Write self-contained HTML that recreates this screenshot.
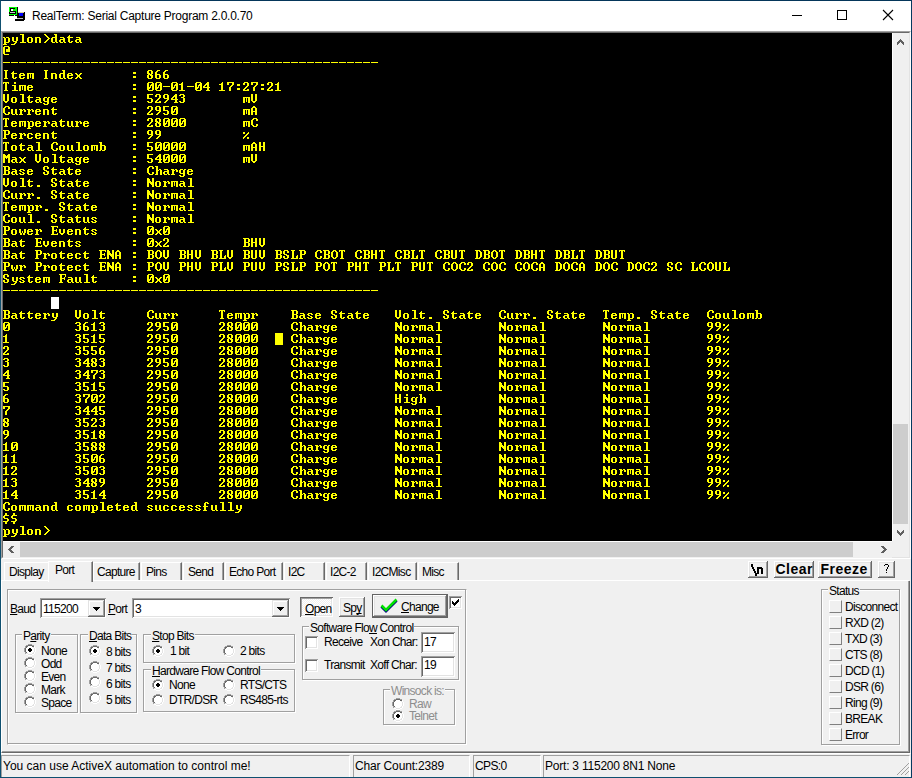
<!DOCTYPE html><html><head><meta charset="utf-8"><style>
html,body{margin:0;padding:0;}
body{width:912px;height:778px;overflow:hidden;position:relative;background:#f0f0f0;font-family:"Liberation Sans",sans-serif;}
.b{position:absolute;box-sizing:border-box;}
.u{position:absolute;white-space:pre;font-size:12px;line-height:12px;letter-spacing:-0.7px;color:#000;}
.s{position:absolute;white-space:pre;font-size:12px;line-height:12px;color:#000;}
#term{position:absolute;left:3px;top:33px;width:889px;height:508px;background:#000;overflow:hidden;}
u{text-decoration:underline;text-decoration-thickness:1px;text-underline-offset:1px;text-decoration-skip-ink:none;}
</style></head><body><div class="b" style="left:0px;top:0px;width:912px;height:31px;background:#fff;"></div><svg class="b" style="left:0px;top:0px" width="30" height="24" shape-rendering="crispEdges"><rect x="9" y="7" width="8" height="8" fill="#00ff00"/><rect x="17" y="7" width="1" height="5" fill="#000"/><rect x="10" y="8" width="5" height="1" fill="#000"/><rect x="10" y="8" width="1" height="4" fill="#000"/><rect x="11" y="9" width="2" height="2" fill="#fff"/><rect x="10" y="11" width="6" height="1" fill="#000"/><rect x="9" y="12" width="7" height="2" fill="#000"/><rect x="10" y="12" width="5" height="1" fill="#c8c8c8"/><rect x="9" y="15" width="5" height="1" fill="#000"/><rect x="15" y="15" width="2" height="1" fill="#000"/><rect x="17" y="12" width="8" height="8" fill="#000"/><rect x="19" y="13" width="4" height="3" fill="#0000ff"/><rect x="18" y="12" width="6" height="1" fill="#d8d0a0"/><rect x="15" y="19" width="9" height="2" fill="#000"/><rect x="17" y="18" width="6" height="1" fill="#c0c0c0"/></svg><div class="s" style="left:32px;top:10px;letter-spacing:-0.25px;">RealTerm: Serial Capture Program 2.0.0.70</div><div class="b" style="left:792px;top:15px;width:10px;height:1px;background:#000;"></div><div class="b" style="left:837px;top:10px;width:10px;height:10px;border:1px solid #000;"></div><svg class="b" style="left:882px;top:9px" width="12" height="12" viewBox="0 0 12 12"><path d="M1 1 L11 11 M11 1 L1 11" stroke="#000" stroke-width="1.1"/></svg><div class="b" style="left:1px;top:31px;width:910px;height:528px;border-top:1px solid #a0a0a0;border-left:1px solid #a0a0a0;border-right:1px solid #fff;border-bottom:1px solid #fff;"></div><div class="b" style="left:2px;top:32px;width:908px;height:526px;border-top:1px solid #696969;border-left:1px solid #696969;border-right:1px solid #e3e3e3;border-bottom:1px solid #e3e3e3;"></div><div id="term"><svg width="889" height="508" style="position:absolute;left:0;top:0" shape-rendering="crispEdges" fill="#ffff00"><defs><path id="g0" d="M2 0h2v1h-2zM2 1h2v1h-2zM1 2h5v1h-5zM0 3h2v1h-2zM0 4h2v1h-2zM1 5h4v1h-4zM4 6h2v1h-2zM4 7h2v1h-2zM0 8h5v1h-5zM2 9h2v1h-2zM2 10h2v1h-2z"/><path id="g1" d="M0 3h2v1h-2zM5 3h1v1h-1zM0 4h2v1h-2zM4 4h2v1h-2zM3 5h2v1h-2zM2 6h2v1h-2zM1 7h2v1h-2zM0 8h2v1h-2zM4 8h2v1h-2zM0 9h1v1h-1zM4 9h2v1h-2z"/><path id="g2" d="M0 5h7v1h-7z"/><path id="g3" d="M2 8h3v1h-3zM2 9h3v1h-3z"/><path id="g4" d="M1 1h5v1h-5zM0 2h2v1h-2zM5 2h2v1h-2zM0 3h2v1h-2zM4 3h3v1h-3zM0 4h2v1h-2zM3 4h4v1h-4zM0 5h2v1h-2zM3 5h1v1h-1zM5 5h2v1h-2zM0 6h4v1h-4zM5 6h2v1h-2zM0 7h3v1h-3zM5 7h2v1h-2zM0 8h2v1h-2zM5 8h2v1h-2zM1 9h5v1h-5z"/><path id="g5" d="M3 1h1v1h-1zM2 2h2v1h-2zM0 3h4v1h-4zM2 4h2v1h-2zM2 5h2v1h-2zM2 6h2v1h-2zM2 7h2v1h-2zM2 8h2v1h-2zM0 9h6v1h-6z"/><path id="g6" d="M1 1h4v1h-4zM0 2h2v1h-2zM4 2h2v1h-2zM0 3h2v1h-2zM4 3h2v1h-2zM4 4h2v1h-2zM3 5h2v1h-2zM2 6h2v1h-2zM1 7h2v1h-2zM0 8h2v1h-2zM4 8h2v1h-2zM0 9h6v1h-6z"/><path id="g7" d="M1 1h4v1h-4zM0 2h2v1h-2zM4 2h2v1h-2zM4 3h2v1h-2zM2 4h3v1h-3zM4 5h2v1h-2zM4 6h2v1h-2zM4 7h2v1h-2zM0 8h2v1h-2zM4 8h2v1h-2zM1 9h4v1h-4z"/><path id="g8" d="M4 1h2v1h-2zM3 2h3v1h-3zM2 3h4v1h-4zM1 4h2v1h-2zM4 4h2v1h-2zM0 5h2v1h-2zM4 5h2v1h-2zM0 6h7v1h-7zM4 7h2v1h-2zM4 8h2v1h-2zM3 9h4v1h-4z"/><path id="g9" d="M0 1h6v1h-6zM0 2h2v1h-2zM0 3h2v1h-2zM0 4h2v1h-2zM0 5h5v1h-5zM4 6h2v1h-2zM4 7h2v1h-2zM0 8h2v1h-2zM4 8h2v1h-2zM1 9h4v1h-4z"/><path id="g10" d="M2 1h3v1h-3zM1 2h2v1h-2zM0 3h2v1h-2zM0 4h2v1h-2zM0 5h5v1h-5zM0 6h2v1h-2zM4 6h2v1h-2zM0 7h2v1h-2zM4 7h2v1h-2zM0 8h2v1h-2zM4 8h2v1h-2zM1 9h4v1h-4z"/><path id="g11" d="M0 1h7v1h-7zM0 2h2v1h-2zM5 2h2v1h-2zM0 3h2v1h-2zM5 3h2v1h-2zM4 4h2v1h-2zM3 5h2v1h-2zM2 6h2v1h-2zM2 7h2v1h-2zM2 8h2v1h-2zM2 9h2v1h-2z"/><path id="g12" d="M1 1h4v1h-4zM0 2h2v1h-2zM4 2h2v1h-2zM0 3h2v1h-2zM4 3h2v1h-2zM0 4h3v1h-3zM4 4h2v1h-2zM1 5h4v1h-4zM0 6h2v1h-2zM3 6h3v1h-3zM0 7h2v1h-2zM4 7h2v1h-2zM0 8h2v1h-2zM4 8h2v1h-2zM1 9h4v1h-4z"/><path id="g13" d="M1 1h4v1h-4zM0 2h2v1h-2zM4 2h2v1h-2zM0 3h2v1h-2zM4 3h2v1h-2zM0 4h2v1h-2zM4 4h2v1h-2zM1 5h5v1h-5zM4 6h2v1h-2zM3 7h2v1h-2zM2 8h2v1h-2zM1 9h2v1h-2z"/><path id="g14" d="M2 3h3v1h-3zM2 4h3v1h-3zM2 7h3v1h-3zM2 8h3v1h-3z"/><path id="g15" d="M1 1h2v1h-2zM2 2h2v1h-2zM3 3h2v1h-2zM4 4h2v1h-2zM5 5h2v1h-2zM4 6h2v1h-2zM3 7h2v1h-2zM2 8h2v1h-2zM1 9h2v1h-2z"/><path id="g16" d="M1 1h5v1h-5zM0 2h2v1h-2zM5 2h2v1h-2zM0 3h2v1h-2zM5 3h2v1h-2zM0 4h2v1h-2zM3 4h4v1h-4zM0 5h2v1h-2zM3 5h4v1h-4zM0 6h2v1h-2zM3 6h4v1h-4zM0 7h2v1h-2zM0 8h2v1h-2zM1 9h5v1h-5z"/><path id="g17" d="M2 1h2v1h-2zM1 2h4v1h-4zM0 3h2v1h-2zM4 3h2v1h-2zM0 4h2v1h-2zM4 4h2v1h-2zM0 5h2v1h-2zM4 5h2v1h-2zM0 6h6v1h-6zM0 7h2v1h-2zM4 7h2v1h-2zM0 8h2v1h-2zM4 8h2v1h-2zM0 9h2v1h-2zM4 9h2v1h-2z"/><path id="g18" d="M0 1h6v1h-6zM1 2h2v1h-2zM5 2h2v1h-2zM1 3h2v1h-2zM5 3h2v1h-2zM1 4h2v1h-2zM5 4h2v1h-2zM1 5h5v1h-5zM1 6h2v1h-2zM5 6h2v1h-2zM1 7h2v1h-2zM5 7h2v1h-2zM1 8h2v1h-2zM5 8h2v1h-2zM0 9h6v1h-6z"/><path id="g19" d="M2 1h4v1h-4zM1 2h2v1h-2zM5 2h2v1h-2zM0 3h2v1h-2zM5 3h2v1h-2zM0 4h2v1h-2zM0 5h2v1h-2zM0 6h2v1h-2zM0 7h2v1h-2zM5 7h2v1h-2zM1 8h2v1h-2zM5 8h2v1h-2zM2 9h4v1h-4z"/><path id="g20" d="M0 1h5v1h-5zM1 2h2v1h-2zM4 2h2v1h-2zM1 3h2v1h-2zM5 3h2v1h-2zM1 4h2v1h-2zM5 4h2v1h-2zM1 5h2v1h-2zM5 5h2v1h-2zM1 6h2v1h-2zM5 6h2v1h-2zM1 7h2v1h-2zM5 7h2v1h-2zM1 8h2v1h-2zM4 8h2v1h-2zM0 9h5v1h-5z"/><path id="g21" d="M0 1h7v1h-7zM1 2h2v1h-2zM6 2h1v1h-1zM1 3h2v1h-2zM1 4h2v1h-2zM5 4h1v1h-1zM1 5h5v1h-5zM1 6h2v1h-2zM5 6h1v1h-1zM1 7h2v1h-2zM1 8h2v1h-2zM6 8h1v1h-1zM0 9h7v1h-7z"/><path id="g22" d="M0 1h7v1h-7zM1 2h2v1h-2zM6 2h1v1h-1zM1 3h2v1h-2zM6 3h1v1h-1zM1 4h2v1h-2zM5 4h1v1h-1zM1 5h5v1h-5zM1 6h2v1h-2zM5 6h1v1h-1zM1 7h2v1h-2zM1 8h2v1h-2zM0 9h4v1h-4z"/><path id="g23" d="M0 1h2v1h-2zM4 1h2v1h-2zM0 2h2v1h-2zM4 2h2v1h-2zM0 3h2v1h-2zM4 3h2v1h-2zM0 4h2v1h-2zM4 4h2v1h-2zM0 5h6v1h-6zM0 6h2v1h-2zM4 6h2v1h-2zM0 7h2v1h-2zM4 7h2v1h-2zM0 8h2v1h-2zM4 8h2v1h-2zM0 9h2v1h-2zM4 9h2v1h-2z"/><path id="g24" d="M1 1h4v1h-4zM2 2h2v1h-2zM2 3h2v1h-2zM2 4h2v1h-2zM2 5h2v1h-2zM2 6h2v1h-2zM2 7h2v1h-2zM2 8h2v1h-2zM1 9h4v1h-4z"/><path id="g25" d="M0 1h4v1h-4zM1 2h2v1h-2zM1 3h2v1h-2zM1 4h2v1h-2zM1 5h2v1h-2zM1 6h2v1h-2zM6 6h1v1h-1zM1 7h2v1h-2zM5 7h2v1h-2zM1 8h2v1h-2zM5 8h2v1h-2zM0 9h7v1h-7z"/><path id="g26" d="M0 1h2v1h-2zM5 1h2v1h-2zM0 2h3v1h-3zM4 2h3v1h-3zM0 3h7v1h-7zM0 4h7v1h-7zM0 5h2v1h-2zM3 5h1v1h-1zM5 5h2v1h-2zM0 6h2v1h-2zM5 6h2v1h-2zM0 7h2v1h-2zM5 7h2v1h-2zM0 8h2v1h-2zM5 8h2v1h-2zM0 9h2v1h-2zM5 9h2v1h-2z"/><path id="g27" d="M0 1h2v1h-2zM5 1h2v1h-2zM0 2h3v1h-3zM5 2h2v1h-2zM0 3h3v1h-3zM5 3h2v1h-2zM0 4h4v1h-4zM5 4h2v1h-2zM0 5h7v1h-7zM0 6h2v1h-2zM3 6h4v1h-4zM0 7h2v1h-2zM4 7h3v1h-3zM0 8h2v1h-2zM5 8h2v1h-2zM0 9h2v1h-2zM5 9h2v1h-2z"/><path id="g28" d="M2 1h3v1h-3zM1 2h2v1h-2zM4 2h2v1h-2zM0 3h2v1h-2zM5 3h2v1h-2zM0 4h2v1h-2zM5 4h2v1h-2zM0 5h2v1h-2zM5 5h2v1h-2zM0 6h2v1h-2zM5 6h2v1h-2zM0 7h2v1h-2zM5 7h2v1h-2zM1 8h2v1h-2zM4 8h2v1h-2zM2 9h3v1h-3z"/><path id="g29" d="M0 1h6v1h-6zM1 2h2v1h-2zM5 2h2v1h-2zM1 3h2v1h-2zM5 3h2v1h-2zM1 4h2v1h-2zM5 4h2v1h-2zM1 5h5v1h-5zM1 6h2v1h-2zM1 7h2v1h-2zM1 8h2v1h-2zM0 9h4v1h-4z"/><path id="g30" d="M1 1h4v1h-4zM0 2h2v1h-2zM4 2h2v1h-2zM0 3h2v1h-2zM4 3h2v1h-2zM0 4h2v1h-2zM1 5h3v1h-3zM3 6h3v1h-3zM0 7h2v1h-2zM4 7h2v1h-2zM0 8h2v1h-2zM4 8h2v1h-2zM1 9h4v1h-4z"/><path id="g31" d="M0 1h6v1h-6zM0 2h1v1h-1zM2 2h2v1h-2zM5 2h1v1h-1zM2 3h2v1h-2zM2 4h2v1h-2zM2 5h2v1h-2zM2 6h2v1h-2zM2 7h2v1h-2zM2 8h2v1h-2zM1 9h4v1h-4z"/><path id="g32" d="M0 1h2v1h-2zM4 1h2v1h-2zM0 2h2v1h-2zM4 2h2v1h-2zM0 3h2v1h-2zM4 3h2v1h-2zM0 4h2v1h-2zM4 4h2v1h-2zM0 5h2v1h-2zM4 5h2v1h-2zM0 6h2v1h-2zM4 6h2v1h-2zM0 7h2v1h-2zM4 7h2v1h-2zM0 8h2v1h-2zM4 8h2v1h-2zM1 9h4v1h-4z"/><path id="g33" d="M0 1h2v1h-2zM4 1h2v1h-2zM0 2h2v1h-2zM4 2h2v1h-2zM0 3h2v1h-2zM4 3h2v1h-2zM0 4h2v1h-2zM4 4h2v1h-2zM0 5h2v1h-2zM4 5h2v1h-2zM0 6h2v1h-2zM4 6h2v1h-2zM0 7h2v1h-2zM4 7h2v1h-2zM1 8h4v1h-4zM2 9h2v1h-2z"/><path id="g34" d="M1 4h4v1h-4zM4 5h2v1h-2zM1 6h5v1h-5zM0 7h2v1h-2zM4 7h2v1h-2zM0 8h2v1h-2zM4 8h2v1h-2zM1 9h3v1h-3zM5 9h2v1h-2z"/><path id="g35" d="M0 1h3v1h-3zM1 2h2v1h-2zM1 3h2v1h-2zM1 4h5v1h-5zM1 5h2v1h-2zM5 5h2v1h-2zM1 6h2v1h-2zM5 6h2v1h-2zM1 7h2v1h-2zM5 7h2v1h-2zM1 8h2v1h-2zM5 8h2v1h-2zM0 9h2v1h-2zM3 9h3v1h-3z"/><path id="g36" d="M1 4h4v1h-4zM0 5h2v1h-2zM4 5h2v1h-2zM0 6h2v1h-2zM0 7h2v1h-2zM0 8h2v1h-2zM4 8h2v1h-2zM1 9h4v1h-4z"/><path id="g37" d="M3 1h3v1h-3zM4 2h2v1h-2zM4 3h2v1h-2zM1 4h5v1h-5zM0 5h2v1h-2zM4 5h2v1h-2zM0 6h2v1h-2zM4 6h2v1h-2zM0 7h2v1h-2zM4 7h2v1h-2zM0 8h2v1h-2zM4 8h2v1h-2zM1 9h3v1h-3zM5 9h2v1h-2z"/><path id="g38" d="M1 4h4v1h-4zM0 5h2v1h-2zM4 5h2v1h-2zM0 6h6v1h-6zM0 7h2v1h-2zM0 8h2v1h-2zM4 8h2v1h-2zM1 9h4v1h-4z"/><path id="g39" d="M2 1h3v1h-3zM1 2h2v1h-2zM4 2h2v1h-2zM1 3h2v1h-2zM1 4h2v1h-2zM0 5h5v1h-5zM1 6h2v1h-2zM1 7h2v1h-2zM1 8h2v1h-2zM0 9h4v1h-4z"/><path id="g40" d="M1 4h3v1h-3zM5 4h2v1h-2zM0 5h2v1h-2zM4 5h2v1h-2zM0 6h2v1h-2zM4 6h2v1h-2zM0 7h2v1h-2zM4 7h2v1h-2zM1 8h5v1h-5zM4 9h2v1h-2zM0 10h2v1h-2zM4 10h2v1h-2zM1 11h4v1h-4z"/><path id="g41" d="M0 1h3v1h-3zM1 2h2v1h-2zM1 3h2v1h-2zM1 4h2v1h-2zM4 4h2v1h-2zM1 5h3v1h-3zM5 5h2v1h-2zM1 6h2v1h-2zM5 6h2v1h-2zM1 7h2v1h-2zM5 7h2v1h-2zM1 8h2v1h-2zM5 8h2v1h-2zM0 9h3v1h-3zM5 9h2v1h-2z"/><path id="g42" d="M3 1h2v1h-2zM3 2h2v1h-2zM1 4h4v1h-4zM3 5h2v1h-2zM3 6h2v1h-2zM3 7h2v1h-2zM3 8h2v1h-2zM1 9h6v1h-6z"/><path id="g43" d="M1 1h4v1h-4zM3 2h2v1h-2zM3 3h2v1h-2zM3 4h2v1h-2zM3 5h2v1h-2zM3 6h2v1h-2zM3 7h2v1h-2zM3 8h2v1h-2zM1 9h6v1h-6z"/><path id="g44" d="M0 4h7v1h-7zM0 5h2v1h-2zM3 5h1v1h-1zM5 5h2v1h-2zM0 6h2v1h-2zM3 6h1v1h-1zM5 6h2v1h-2zM0 7h2v1h-2zM3 7h1v1h-1zM5 7h2v1h-2zM0 8h2v1h-2zM3 8h1v1h-1zM5 8h2v1h-2zM0 9h2v1h-2zM5 9h2v1h-2z"/><path id="g45" d="M0 4h5v1h-5zM0 5h2v1h-2zM4 5h2v1h-2zM0 6h2v1h-2zM4 6h2v1h-2zM0 7h2v1h-2zM4 7h2v1h-2zM0 8h2v1h-2zM4 8h2v1h-2zM0 9h2v1h-2zM4 9h2v1h-2z"/><path id="g46" d="M1 4h4v1h-4zM0 5h2v1h-2zM4 5h2v1h-2zM0 6h2v1h-2zM4 6h2v1h-2zM0 7h2v1h-2zM4 7h2v1h-2zM0 8h2v1h-2zM4 8h2v1h-2zM1 9h4v1h-4z"/><path id="g47" d="M0 4h2v1h-2zM3 4h3v1h-3zM1 5h2v1h-2zM5 5h2v1h-2zM1 6h2v1h-2zM5 6h2v1h-2zM1 7h2v1h-2zM5 7h2v1h-2zM1 8h2v1h-2zM5 8h2v1h-2zM1 9h5v1h-5zM1 10h2v1h-2zM0 11h4v1h-4z"/><path id="g48" d="M0 4h3v1h-3zM4 4h2v1h-2zM1 5h3v1h-3zM5 5h2v1h-2zM1 6h2v1h-2zM5 6h2v1h-2zM1 7h2v1h-2zM1 8h2v1h-2zM0 9h4v1h-4z"/><path id="g49" d="M1 4h4v1h-4zM0 5h2v1h-2zM4 5h2v1h-2zM1 6h2v1h-2zM3 7h2v1h-2zM0 8h2v1h-2zM4 8h2v1h-2zM1 9h4v1h-4z"/><path id="g50" d="M2 2h1v1h-1zM1 3h2v1h-2zM0 4h6v1h-6zM1 5h2v1h-2zM1 6h2v1h-2zM1 7h2v1h-2zM1 8h2v1h-2zM4 8h2v1h-2zM2 9h3v1h-3z"/><path id="g51" d="M0 4h2v1h-2zM4 4h2v1h-2zM0 5h2v1h-2zM4 5h2v1h-2zM0 6h2v1h-2zM4 6h2v1h-2zM0 7h2v1h-2zM4 7h2v1h-2zM0 8h2v1h-2zM4 8h2v1h-2zM1 9h3v1h-3zM5 9h2v1h-2z"/><path id="g52" d="M0 4h2v1h-2zM4 4h2v1h-2zM0 5h2v1h-2zM4 5h2v1h-2zM0 6h2v1h-2zM4 6h2v1h-2zM0 7h2v1h-2zM4 7h2v1h-2zM1 8h4v1h-4zM2 9h2v1h-2z"/><path id="g53" d="M0 4h2v1h-2zM5 4h2v1h-2zM0 5h2v1h-2zM5 5h2v1h-2zM0 6h2v1h-2zM3 6h1v1h-1zM5 6h2v1h-2zM0 7h2v1h-2zM3 7h1v1h-1zM5 7h2v1h-2zM1 8h2v1h-2zM4 8h2v1h-2zM1 9h2v1h-2zM4 9h2v1h-2z"/><path id="g54" d="M0 4h2v1h-2zM5 4h2v1h-2zM1 5h2v1h-2zM4 5h2v1h-2zM2 6h3v1h-3zM2 7h3v1h-3zM1 8h2v1h-2zM4 8h2v1h-2zM0 9h2v1h-2zM5 9h2v1h-2z"/><path id="g55" d="M1 4h2v1h-2zM5 4h2v1h-2zM1 5h2v1h-2zM5 5h2v1h-2zM1 6h2v1h-2zM5 6h2v1h-2zM1 7h2v1h-2zM5 7h2v1h-2zM2 8h4v1h-4zM4 9h2v1h-2zM3 10h2v1h-2zM0 11h4v1h-4z"/></defs><g transform="translate(0 0)"><use href="#g47" x="0"/><use href="#g55" x="8"/><use href="#g43" x="16"/><use href="#g46" x="24"/><use href="#g45" x="32"/><use href="#g15" x="40"/><use href="#g37" x="48"/><use href="#g34" x="56"/><use href="#g50" x="64"/><use href="#g34" x="72"/></g><g transform="translate(0 12)"><use href="#g16" x="0"/></g><g transform="translate(0 24)"><use href="#g2" x="0"/><use href="#g2" x="8"/><use href="#g2" x="16"/><use href="#g2" x="24"/><use href="#g2" x="32"/><use href="#g2" x="40"/><use href="#g2" x="48"/><use href="#g2" x="56"/><use href="#g2" x="64"/><use href="#g2" x="72"/><use href="#g2" x="80"/><use href="#g2" x="88"/><use href="#g2" x="96"/><use href="#g2" x="104"/><use href="#g2" x="112"/><use href="#g2" x="120"/><use href="#g2" x="128"/><use href="#g2" x="136"/><use href="#g2" x="144"/><use href="#g2" x="152"/><use href="#g2" x="160"/><use href="#g2" x="168"/><use href="#g2" x="176"/><use href="#g2" x="184"/><use href="#g2" x="192"/><use href="#g2" x="200"/><use href="#g2" x="208"/><use href="#g2" x="216"/><use href="#g2" x="224"/><use href="#g2" x="232"/><use href="#g2" x="240"/><use href="#g2" x="248"/><use href="#g2" x="256"/><use href="#g2" x="264"/><use href="#g2" x="272"/><use href="#g2" x="280"/><use href="#g2" x="288"/><use href="#g2" x="296"/><use href="#g2" x="304"/><use href="#g2" x="312"/><use href="#g2" x="320"/><use href="#g2" x="328"/><use href="#g2" x="336"/><use href="#g2" x="344"/><use href="#g2" x="352"/><use href="#g2" x="360"/><use href="#g2" x="368"/></g><g transform="translate(0 36)"><use href="#g24" x="0"/><use href="#g50" x="8"/><use href="#g38" x="16"/><use href="#g44" x="24"/><use href="#g24" x="40"/><use href="#g45" x="48"/><use href="#g37" x="56"/><use href="#g38" x="64"/><use href="#g54" x="72"/><use href="#g14" x="128"/><use href="#g12" x="144"/><use href="#g10" x="152"/><use href="#g10" x="160"/></g><g transform="translate(0 48)"><use href="#g31" x="0"/><use href="#g42" x="8"/><use href="#g44" x="16"/><use href="#g38" x="24"/><use href="#g14" x="128"/><use href="#g4" x="144"/><use href="#g4" x="152"/><use href="#g2" x="160"/><use href="#g4" x="168"/><use href="#g5" x="176"/><use href="#g2" x="184"/><use href="#g4" x="192"/><use href="#g8" x="200"/><use href="#g5" x="216"/><use href="#g11" x="224"/><use href="#g14" x="232"/><use href="#g6" x="240"/><use href="#g11" x="248"/><use href="#g14" x="256"/><use href="#g6" x="264"/><use href="#g5" x="272"/></g><g transform="translate(0 60)"><use href="#g33" x="0"/><use href="#g46" x="8"/><use href="#g43" x="16"/><use href="#g50" x="24"/><use href="#g34" x="32"/><use href="#g40" x="40"/><use href="#g38" x="48"/><use href="#g14" x="128"/><use href="#g9" x="144"/><use href="#g6" x="152"/><use href="#g13" x="160"/><use href="#g8" x="168"/><use href="#g7" x="176"/><use href="#g44" x="240"/><use href="#g33" x="248"/></g><g transform="translate(0 72)"><use href="#g19" x="0"/><use href="#g51" x="8"/><use href="#g48" x="16"/><use href="#g48" x="24"/><use href="#g38" x="32"/><use href="#g45" x="40"/><use href="#g50" x="48"/><use href="#g14" x="128"/><use href="#g6" x="144"/><use href="#g13" x="152"/><use href="#g9" x="160"/><use href="#g4" x="168"/><use href="#g44" x="240"/><use href="#g17" x="248"/></g><g transform="translate(0 84)"><use href="#g31" x="0"/><use href="#g38" x="8"/><use href="#g44" x="16"/><use href="#g47" x="24"/><use href="#g38" x="32"/><use href="#g48" x="40"/><use href="#g34" x="48"/><use href="#g50" x="56"/><use href="#g51" x="64"/><use href="#g48" x="72"/><use href="#g38" x="80"/><use href="#g14" x="128"/><use href="#g6" x="144"/><use href="#g12" x="152"/><use href="#g4" x="160"/><use href="#g4" x="168"/><use href="#g4" x="176"/><use href="#g44" x="240"/><use href="#g19" x="248"/></g><g transform="translate(0 96)"><use href="#g29" x="0"/><use href="#g38" x="8"/><use href="#g48" x="16"/><use href="#g36" x="24"/><use href="#g38" x="32"/><use href="#g45" x="40"/><use href="#g50" x="48"/><use href="#g14" x="128"/><use href="#g13" x="144"/><use href="#g13" x="152"/><use href="#g1" x="240"/></g><g transform="translate(0 108)"><use href="#g31" x="0"/><use href="#g46" x="8"/><use href="#g50" x="16"/><use href="#g34" x="24"/><use href="#g43" x="32"/><use href="#g19" x="48"/><use href="#g46" x="56"/><use href="#g51" x="64"/><use href="#g43" x="72"/><use href="#g46" x="80"/><use href="#g44" x="88"/><use href="#g35" x="96"/><use href="#g14" x="128"/><use href="#g9" x="144"/><use href="#g4" x="152"/><use href="#g4" x="160"/><use href="#g4" x="168"/><use href="#g4" x="176"/><use href="#g44" x="240"/><use href="#g17" x="248"/><use href="#g23" x="256"/></g><g transform="translate(0 120)"><use href="#g26" x="0"/><use href="#g34" x="8"/><use href="#g54" x="16"/><use href="#g33" x="32"/><use href="#g46" x="40"/><use href="#g43" x="48"/><use href="#g50" x="56"/><use href="#g34" x="64"/><use href="#g40" x="72"/><use href="#g38" x="80"/><use href="#g14" x="128"/><use href="#g9" x="144"/><use href="#g8" x="152"/><use href="#g4" x="160"/><use href="#g4" x="168"/><use href="#g4" x="176"/><use href="#g44" x="240"/><use href="#g33" x="248"/></g><g transform="translate(0 132)"><use href="#g18" x="0"/><use href="#g34" x="8"/><use href="#g49" x="16"/><use href="#g38" x="24"/><use href="#g30" x="40"/><use href="#g50" x="48"/><use href="#g34" x="56"/><use href="#g50" x="64"/><use href="#g38" x="72"/><use href="#g14" x="128"/><use href="#g19" x="144"/><use href="#g41" x="152"/><use href="#g34" x="160"/><use href="#g48" x="168"/><use href="#g40" x="176"/><use href="#g38" x="184"/></g><g transform="translate(0 144)"><use href="#g33" x="0"/><use href="#g46" x="8"/><use href="#g43" x="16"/><use href="#g50" x="24"/><use href="#g3" x="32"/><use href="#g30" x="48"/><use href="#g50" x="56"/><use href="#g34" x="64"/><use href="#g50" x="72"/><use href="#g38" x="80"/><use href="#g14" x="128"/><use href="#g27" x="144"/><use href="#g46" x="152"/><use href="#g48" x="160"/><use href="#g44" x="168"/><use href="#g34" x="176"/><use href="#g43" x="184"/></g><g transform="translate(0 156)"><use href="#g19" x="0"/><use href="#g51" x="8"/><use href="#g48" x="16"/><use href="#g48" x="24"/><use href="#g3" x="32"/><use href="#g30" x="48"/><use href="#g50" x="56"/><use href="#g34" x="64"/><use href="#g50" x="72"/><use href="#g38" x="80"/><use href="#g14" x="128"/><use href="#g27" x="144"/><use href="#g46" x="152"/><use href="#g48" x="160"/><use href="#g44" x="168"/><use href="#g34" x="176"/><use href="#g43" x="184"/></g><g transform="translate(0 168)"><use href="#g31" x="0"/><use href="#g38" x="8"/><use href="#g44" x="16"/><use href="#g47" x="24"/><use href="#g48" x="32"/><use href="#g3" x="40"/><use href="#g30" x="56"/><use href="#g50" x="64"/><use href="#g34" x="72"/><use href="#g50" x="80"/><use href="#g38" x="88"/><use href="#g14" x="128"/><use href="#g27" x="144"/><use href="#g46" x="152"/><use href="#g48" x="160"/><use href="#g44" x="168"/><use href="#g34" x="176"/><use href="#g43" x="184"/></g><g transform="translate(0 180)"><use href="#g19" x="0"/><use href="#g46" x="8"/><use href="#g51" x="16"/><use href="#g43" x="24"/><use href="#g3" x="32"/><use href="#g30" x="48"/><use href="#g50" x="56"/><use href="#g34" x="64"/><use href="#g50" x="72"/><use href="#g51" x="80"/><use href="#g49" x="88"/><use href="#g14" x="128"/><use href="#g27" x="144"/><use href="#g46" x="152"/><use href="#g48" x="160"/><use href="#g44" x="168"/><use href="#g34" x="176"/><use href="#g43" x="184"/></g><g transform="translate(0 192)"><use href="#g29" x="0"/><use href="#g46" x="8"/><use href="#g53" x="16"/><use href="#g38" x="24"/><use href="#g48" x="32"/><use href="#g21" x="48"/><use href="#g52" x="56"/><use href="#g38" x="64"/><use href="#g45" x="72"/><use href="#g50" x="80"/><use href="#g49" x="88"/><use href="#g14" x="128"/><use href="#g4" x="144"/><use href="#g54" x="152"/><use href="#g4" x="160"/></g><g transform="translate(0 204)"><use href="#g18" x="0"/><use href="#g34" x="8"/><use href="#g50" x="16"/><use href="#g21" x="32"/><use href="#g52" x="40"/><use href="#g38" x="48"/><use href="#g45" x="56"/><use href="#g50" x="64"/><use href="#g49" x="72"/><use href="#g14" x="128"/><use href="#g4" x="144"/><use href="#g54" x="152"/><use href="#g6" x="160"/><use href="#g18" x="240"/><use href="#g23" x="248"/><use href="#g33" x="256"/></g><g transform="translate(0 216)"><use href="#g18" x="0"/><use href="#g34" x="8"/><use href="#g50" x="16"/><use href="#g29" x="32"/><use href="#g48" x="40"/><use href="#g46" x="48"/><use href="#g50" x="56"/><use href="#g38" x="64"/><use href="#g36" x="72"/><use href="#g50" x="80"/><use href="#g21" x="96"/><use href="#g27" x="104"/><use href="#g17" x="112"/><use href="#g14" x="128"/><use href="#g18" x="144"/><use href="#g28" x="152"/><use href="#g33" x="160"/><use href="#g18" x="176"/><use href="#g23" x="184"/><use href="#g33" x="192"/><use href="#g18" x="208"/><use href="#g25" x="216"/><use href="#g33" x="224"/><use href="#g18" x="240"/><use href="#g32" x="248"/><use href="#g33" x="256"/><use href="#g18" x="272"/><use href="#g30" x="280"/><use href="#g25" x="288"/><use href="#g29" x="296"/><use href="#g19" x="312"/><use href="#g18" x="320"/><use href="#g28" x="328"/><use href="#g31" x="336"/><use href="#g19" x="352"/><use href="#g18" x="360"/><use href="#g23" x="368"/><use href="#g31" x="376"/><use href="#g19" x="392"/><use href="#g18" x="400"/><use href="#g25" x="408"/><use href="#g31" x="416"/><use href="#g19" x="432"/><use href="#g18" x="440"/><use href="#g32" x="448"/><use href="#g31" x="456"/><use href="#g20" x="472"/><use href="#g18" x="480"/><use href="#g28" x="488"/><use href="#g31" x="496"/><use href="#g20" x="512"/><use href="#g18" x="520"/><use href="#g23" x="528"/><use href="#g31" x="536"/><use href="#g20" x="552"/><use href="#g18" x="560"/><use href="#g25" x="568"/><use href="#g31" x="576"/><use href="#g20" x="592"/><use href="#g18" x="600"/><use href="#g32" x="608"/><use href="#g31" x="616"/></g><g transform="translate(0 228)"><use href="#g29" x="0"/><use href="#g53" x="8"/><use href="#g48" x="16"/><use href="#g29" x="32"/><use href="#g48" x="40"/><use href="#g46" x="48"/><use href="#g50" x="56"/><use href="#g38" x="64"/><use href="#g36" x="72"/><use href="#g50" x="80"/><use href="#g21" x="96"/><use href="#g27" x="104"/><use href="#g17" x="112"/><use href="#g14" x="128"/><use href="#g29" x="144"/><use href="#g28" x="152"/><use href="#g33" x="160"/><use href="#g29" x="176"/><use href="#g23" x="184"/><use href="#g33" x="192"/><use href="#g29" x="208"/><use href="#g25" x="216"/><use href="#g33" x="224"/><use href="#g29" x="240"/><use href="#g32" x="248"/><use href="#g33" x="256"/><use href="#g29" x="272"/><use href="#g30" x="280"/><use href="#g25" x="288"/><use href="#g29" x="296"/><use href="#g29" x="312"/><use href="#g28" x="320"/><use href="#g31" x="328"/><use href="#g29" x="344"/><use href="#g23" x="352"/><use href="#g31" x="360"/><use href="#g29" x="376"/><use href="#g25" x="384"/><use href="#g31" x="392"/><use href="#g29" x="408"/><use href="#g32" x="416"/><use href="#g31" x="424"/><use href="#g19" x="440"/><use href="#g28" x="448"/><use href="#g19" x="456"/><use href="#g6" x="464"/><use href="#g19" x="480"/><use href="#g28" x="488"/><use href="#g19" x="496"/><use href="#g19" x="512"/><use href="#g28" x="520"/><use href="#g19" x="528"/><use href="#g17" x="536"/><use href="#g20" x="552"/><use href="#g28" x="560"/><use href="#g19" x="568"/><use href="#g17" x="576"/><use href="#g20" x="592"/><use href="#g28" x="600"/><use href="#g19" x="608"/><use href="#g20" x="624"/><use href="#g28" x="632"/><use href="#g19" x="640"/><use href="#g6" x="648"/><use href="#g30" x="664"/><use href="#g19" x="672"/><use href="#g25" x="688"/><use href="#g19" x="696"/><use href="#g28" x="704"/><use href="#g32" x="712"/><use href="#g25" x="720"/></g><g transform="translate(0 240)"><use href="#g30" x="0"/><use href="#g55" x="8"/><use href="#g49" x="16"/><use href="#g50" x="24"/><use href="#g38" x="32"/><use href="#g44" x="40"/><use href="#g22" x="56"/><use href="#g34" x="64"/><use href="#g51" x="72"/><use href="#g43" x="80"/><use href="#g50" x="88"/><use href="#g14" x="128"/><use href="#g4" x="144"/><use href="#g54" x="152"/><use href="#g4" x="160"/></g><g transform="translate(0 252)"><use href="#g2" x="0"/><use href="#g2" x="8"/><use href="#g2" x="16"/><use href="#g2" x="24"/><use href="#g2" x="32"/><use href="#g2" x="40"/><use href="#g2" x="48"/><use href="#g2" x="56"/><use href="#g2" x="64"/><use href="#g2" x="72"/><use href="#g2" x="80"/><use href="#g2" x="88"/><use href="#g2" x="96"/><use href="#g2" x="104"/><use href="#g2" x="112"/><use href="#g2" x="120"/><use href="#g2" x="128"/><use href="#g2" x="136"/><use href="#g2" x="144"/><use href="#g2" x="152"/><use href="#g2" x="160"/><use href="#g2" x="168"/><use href="#g2" x="176"/><use href="#g2" x="184"/><use href="#g2" x="192"/><use href="#g2" x="200"/><use href="#g2" x="208"/><use href="#g2" x="216"/><use href="#g2" x="224"/><use href="#g2" x="232"/><use href="#g2" x="240"/><use href="#g2" x="248"/><use href="#g2" x="256"/><use href="#g2" x="264"/><use href="#g2" x="272"/><use href="#g2" x="280"/><use href="#g2" x="288"/><use href="#g2" x="296"/><use href="#g2" x="304"/><use href="#g2" x="312"/><use href="#g2" x="320"/><use href="#g2" x="328"/><use href="#g2" x="336"/><use href="#g2" x="344"/><use href="#g2" x="352"/><use href="#g2" x="360"/><use href="#g2" x="368"/></g><g transform="translate(0 276)"><use href="#g18" x="0"/><use href="#g34" x="8"/><use href="#g50" x="16"/><use href="#g50" x="24"/><use href="#g38" x="32"/><use href="#g48" x="40"/><use href="#g55" x="48"/><use href="#g33" x="72"/><use href="#g46" x="80"/><use href="#g43" x="88"/><use href="#g50" x="96"/><use href="#g19" x="144"/><use href="#g51" x="152"/><use href="#g48" x="160"/><use href="#g48" x="168"/><use href="#g31" x="216"/><use href="#g38" x="224"/><use href="#g44" x="232"/><use href="#g47" x="240"/><use href="#g48" x="248"/><use href="#g18" x="288"/><use href="#g34" x="296"/><use href="#g49" x="304"/><use href="#g38" x="312"/><use href="#g30" x="328"/><use href="#g50" x="336"/><use href="#g34" x="344"/><use href="#g50" x="352"/><use href="#g38" x="360"/><use href="#g33" x="392"/><use href="#g46" x="400"/><use href="#g43" x="408"/><use href="#g50" x="416"/><use href="#g3" x="424"/><use href="#g30" x="440"/><use href="#g50" x="448"/><use href="#g34" x="456"/><use href="#g50" x="464"/><use href="#g38" x="472"/><use href="#g19" x="496"/><use href="#g51" x="504"/><use href="#g48" x="512"/><use href="#g48" x="520"/><use href="#g3" x="528"/><use href="#g30" x="544"/><use href="#g50" x="552"/><use href="#g34" x="560"/><use href="#g50" x="568"/><use href="#g38" x="576"/><use href="#g31" x="600"/><use href="#g38" x="608"/><use href="#g44" x="616"/><use href="#g47" x="624"/><use href="#g3" x="632"/><use href="#g30" x="648"/><use href="#g50" x="656"/><use href="#g34" x="664"/><use href="#g50" x="672"/><use href="#g38" x="680"/><use href="#g19" x="704"/><use href="#g46" x="712"/><use href="#g51" x="720"/><use href="#g43" x="728"/><use href="#g46" x="736"/><use href="#g44" x="744"/><use href="#g35" x="752"/></g><g transform="translate(0 288)"><use href="#g4" x="0"/><use href="#g7" x="72"/><use href="#g10" x="80"/><use href="#g5" x="88"/><use href="#g7" x="96"/><use href="#g6" x="144"/><use href="#g13" x="152"/><use href="#g9" x="160"/><use href="#g4" x="168"/><use href="#g6" x="216"/><use href="#g12" x="224"/><use href="#g4" x="232"/><use href="#g4" x="240"/><use href="#g4" x="248"/><use href="#g19" x="288"/><use href="#g41" x="296"/><use href="#g34" x="304"/><use href="#g48" x="312"/><use href="#g40" x="320"/><use href="#g38" x="328"/><use href="#g27" x="392"/><use href="#g46" x="400"/><use href="#g48" x="408"/><use href="#g44" x="416"/><use href="#g34" x="424"/><use href="#g43" x="432"/><use href="#g27" x="496"/><use href="#g46" x="504"/><use href="#g48" x="512"/><use href="#g44" x="520"/><use href="#g34" x="528"/><use href="#g43" x="536"/><use href="#g27" x="600"/><use href="#g46" x="608"/><use href="#g48" x="616"/><use href="#g44" x="624"/><use href="#g34" x="632"/><use href="#g43" x="640"/><use href="#g13" x="704"/><use href="#g13" x="712"/><use href="#g1" x="720"/></g><g transform="translate(0 300)"><use href="#g5" x="0"/><use href="#g7" x="72"/><use href="#g9" x="80"/><use href="#g5" x="88"/><use href="#g9" x="96"/><use href="#g6" x="144"/><use href="#g13" x="152"/><use href="#g9" x="160"/><use href="#g4" x="168"/><use href="#g6" x="216"/><use href="#g12" x="224"/><use href="#g4" x="232"/><use href="#g4" x="240"/><use href="#g4" x="248"/><use href="#g19" x="288"/><use href="#g41" x="296"/><use href="#g34" x="304"/><use href="#g48" x="312"/><use href="#g40" x="320"/><use href="#g38" x="328"/><use href="#g27" x="392"/><use href="#g46" x="400"/><use href="#g48" x="408"/><use href="#g44" x="416"/><use href="#g34" x="424"/><use href="#g43" x="432"/><use href="#g27" x="496"/><use href="#g46" x="504"/><use href="#g48" x="512"/><use href="#g44" x="520"/><use href="#g34" x="528"/><use href="#g43" x="536"/><use href="#g27" x="600"/><use href="#g46" x="608"/><use href="#g48" x="616"/><use href="#g44" x="624"/><use href="#g34" x="632"/><use href="#g43" x="640"/><use href="#g13" x="704"/><use href="#g13" x="712"/><use href="#g1" x="720"/></g><g transform="translate(0 312)"><use href="#g6" x="0"/><use href="#g7" x="72"/><use href="#g9" x="80"/><use href="#g9" x="88"/><use href="#g10" x="96"/><use href="#g6" x="144"/><use href="#g13" x="152"/><use href="#g9" x="160"/><use href="#g4" x="168"/><use href="#g6" x="216"/><use href="#g12" x="224"/><use href="#g4" x="232"/><use href="#g4" x="240"/><use href="#g4" x="248"/><use href="#g19" x="288"/><use href="#g41" x="296"/><use href="#g34" x="304"/><use href="#g48" x="312"/><use href="#g40" x="320"/><use href="#g38" x="328"/><use href="#g27" x="392"/><use href="#g46" x="400"/><use href="#g48" x="408"/><use href="#g44" x="416"/><use href="#g34" x="424"/><use href="#g43" x="432"/><use href="#g27" x="496"/><use href="#g46" x="504"/><use href="#g48" x="512"/><use href="#g44" x="520"/><use href="#g34" x="528"/><use href="#g43" x="536"/><use href="#g27" x="600"/><use href="#g46" x="608"/><use href="#g48" x="616"/><use href="#g44" x="624"/><use href="#g34" x="632"/><use href="#g43" x="640"/><use href="#g13" x="704"/><use href="#g13" x="712"/><use href="#g1" x="720"/></g><g transform="translate(0 324)"><use href="#g7" x="0"/><use href="#g7" x="72"/><use href="#g8" x="80"/><use href="#g12" x="88"/><use href="#g7" x="96"/><use href="#g6" x="144"/><use href="#g13" x="152"/><use href="#g9" x="160"/><use href="#g4" x="168"/><use href="#g6" x="216"/><use href="#g12" x="224"/><use href="#g4" x="232"/><use href="#g4" x="240"/><use href="#g4" x="248"/><use href="#g19" x="288"/><use href="#g41" x="296"/><use href="#g34" x="304"/><use href="#g48" x="312"/><use href="#g40" x="320"/><use href="#g38" x="328"/><use href="#g27" x="392"/><use href="#g46" x="400"/><use href="#g48" x="408"/><use href="#g44" x="416"/><use href="#g34" x="424"/><use href="#g43" x="432"/><use href="#g27" x="496"/><use href="#g46" x="504"/><use href="#g48" x="512"/><use href="#g44" x="520"/><use href="#g34" x="528"/><use href="#g43" x="536"/><use href="#g27" x="600"/><use href="#g46" x="608"/><use href="#g48" x="616"/><use href="#g44" x="624"/><use href="#g34" x="632"/><use href="#g43" x="640"/><use href="#g13" x="704"/><use href="#g13" x="712"/><use href="#g1" x="720"/></g><g transform="translate(0 336)"><use href="#g8" x="0"/><use href="#g7" x="72"/><use href="#g8" x="80"/><use href="#g11" x="88"/><use href="#g7" x="96"/><use href="#g6" x="144"/><use href="#g13" x="152"/><use href="#g9" x="160"/><use href="#g4" x="168"/><use href="#g6" x="216"/><use href="#g12" x="224"/><use href="#g4" x="232"/><use href="#g4" x="240"/><use href="#g4" x="248"/><use href="#g19" x="288"/><use href="#g41" x="296"/><use href="#g34" x="304"/><use href="#g48" x="312"/><use href="#g40" x="320"/><use href="#g38" x="328"/><use href="#g27" x="392"/><use href="#g46" x="400"/><use href="#g48" x="408"/><use href="#g44" x="416"/><use href="#g34" x="424"/><use href="#g43" x="432"/><use href="#g27" x="496"/><use href="#g46" x="504"/><use href="#g48" x="512"/><use href="#g44" x="520"/><use href="#g34" x="528"/><use href="#g43" x="536"/><use href="#g27" x="600"/><use href="#g46" x="608"/><use href="#g48" x="616"/><use href="#g44" x="624"/><use href="#g34" x="632"/><use href="#g43" x="640"/><use href="#g13" x="704"/><use href="#g13" x="712"/><use href="#g1" x="720"/></g><g transform="translate(0 348)"><use href="#g9" x="0"/><use href="#g7" x="72"/><use href="#g9" x="80"/><use href="#g5" x="88"/><use href="#g9" x="96"/><use href="#g6" x="144"/><use href="#g13" x="152"/><use href="#g9" x="160"/><use href="#g4" x="168"/><use href="#g6" x="216"/><use href="#g12" x="224"/><use href="#g4" x="232"/><use href="#g4" x="240"/><use href="#g4" x="248"/><use href="#g19" x="288"/><use href="#g41" x="296"/><use href="#g34" x="304"/><use href="#g48" x="312"/><use href="#g40" x="320"/><use href="#g38" x="328"/><use href="#g27" x="392"/><use href="#g46" x="400"/><use href="#g48" x="408"/><use href="#g44" x="416"/><use href="#g34" x="424"/><use href="#g43" x="432"/><use href="#g27" x="496"/><use href="#g46" x="504"/><use href="#g48" x="512"/><use href="#g44" x="520"/><use href="#g34" x="528"/><use href="#g43" x="536"/><use href="#g27" x="600"/><use href="#g46" x="608"/><use href="#g48" x="616"/><use href="#g44" x="624"/><use href="#g34" x="632"/><use href="#g43" x="640"/><use href="#g13" x="704"/><use href="#g13" x="712"/><use href="#g1" x="720"/></g><g transform="translate(0 360)"><use href="#g10" x="0"/><use href="#g7" x="72"/><use href="#g11" x="80"/><use href="#g4" x="88"/><use href="#g6" x="96"/><use href="#g6" x="144"/><use href="#g13" x="152"/><use href="#g9" x="160"/><use href="#g4" x="168"/><use href="#g6" x="216"/><use href="#g12" x="224"/><use href="#g4" x="232"/><use href="#g4" x="240"/><use href="#g4" x="248"/><use href="#g19" x="288"/><use href="#g41" x="296"/><use href="#g34" x="304"/><use href="#g48" x="312"/><use href="#g40" x="320"/><use href="#g38" x="328"/><use href="#g23" x="392"/><use href="#g42" x="400"/><use href="#g40" x="408"/><use href="#g41" x="416"/><use href="#g27" x="496"/><use href="#g46" x="504"/><use href="#g48" x="512"/><use href="#g44" x="520"/><use href="#g34" x="528"/><use href="#g43" x="536"/><use href="#g27" x="600"/><use href="#g46" x="608"/><use href="#g48" x="616"/><use href="#g44" x="624"/><use href="#g34" x="632"/><use href="#g43" x="640"/><use href="#g13" x="704"/><use href="#g13" x="712"/><use href="#g1" x="720"/></g><g transform="translate(0 372)"><use href="#g11" x="0"/><use href="#g7" x="72"/><use href="#g8" x="80"/><use href="#g8" x="88"/><use href="#g9" x="96"/><use href="#g6" x="144"/><use href="#g13" x="152"/><use href="#g9" x="160"/><use href="#g4" x="168"/><use href="#g6" x="216"/><use href="#g12" x="224"/><use href="#g4" x="232"/><use href="#g4" x="240"/><use href="#g4" x="248"/><use href="#g19" x="288"/><use href="#g41" x="296"/><use href="#g34" x="304"/><use href="#g48" x="312"/><use href="#g40" x="320"/><use href="#g38" x="328"/><use href="#g27" x="392"/><use href="#g46" x="400"/><use href="#g48" x="408"/><use href="#g44" x="416"/><use href="#g34" x="424"/><use href="#g43" x="432"/><use href="#g27" x="496"/><use href="#g46" x="504"/><use href="#g48" x="512"/><use href="#g44" x="520"/><use href="#g34" x="528"/><use href="#g43" x="536"/><use href="#g27" x="600"/><use href="#g46" x="608"/><use href="#g48" x="616"/><use href="#g44" x="624"/><use href="#g34" x="632"/><use href="#g43" x="640"/><use href="#g13" x="704"/><use href="#g13" x="712"/><use href="#g1" x="720"/></g><g transform="translate(0 384)"><use href="#g12" x="0"/><use href="#g7" x="72"/><use href="#g9" x="80"/><use href="#g6" x="88"/><use href="#g7" x="96"/><use href="#g6" x="144"/><use href="#g13" x="152"/><use href="#g9" x="160"/><use href="#g4" x="168"/><use href="#g6" x="216"/><use href="#g12" x="224"/><use href="#g4" x="232"/><use href="#g4" x="240"/><use href="#g4" x="248"/><use href="#g19" x="288"/><use href="#g41" x="296"/><use href="#g34" x="304"/><use href="#g48" x="312"/><use href="#g40" x="320"/><use href="#g38" x="328"/><use href="#g27" x="392"/><use href="#g46" x="400"/><use href="#g48" x="408"/><use href="#g44" x="416"/><use href="#g34" x="424"/><use href="#g43" x="432"/><use href="#g27" x="496"/><use href="#g46" x="504"/><use href="#g48" x="512"/><use href="#g44" x="520"/><use href="#g34" x="528"/><use href="#g43" x="536"/><use href="#g27" x="600"/><use href="#g46" x="608"/><use href="#g48" x="616"/><use href="#g44" x="624"/><use href="#g34" x="632"/><use href="#g43" x="640"/><use href="#g13" x="704"/><use href="#g13" x="712"/><use href="#g1" x="720"/></g><g transform="translate(0 396)"><use href="#g13" x="0"/><use href="#g7" x="72"/><use href="#g9" x="80"/><use href="#g5" x="88"/><use href="#g12" x="96"/><use href="#g6" x="144"/><use href="#g13" x="152"/><use href="#g9" x="160"/><use href="#g4" x="168"/><use href="#g6" x="216"/><use href="#g12" x="224"/><use href="#g4" x="232"/><use href="#g4" x="240"/><use href="#g4" x="248"/><use href="#g19" x="288"/><use href="#g41" x="296"/><use href="#g34" x="304"/><use href="#g48" x="312"/><use href="#g40" x="320"/><use href="#g38" x="328"/><use href="#g27" x="392"/><use href="#g46" x="400"/><use href="#g48" x="408"/><use href="#g44" x="416"/><use href="#g34" x="424"/><use href="#g43" x="432"/><use href="#g27" x="496"/><use href="#g46" x="504"/><use href="#g48" x="512"/><use href="#g44" x="520"/><use href="#g34" x="528"/><use href="#g43" x="536"/><use href="#g27" x="600"/><use href="#g46" x="608"/><use href="#g48" x="616"/><use href="#g44" x="624"/><use href="#g34" x="632"/><use href="#g43" x="640"/><use href="#g13" x="704"/><use href="#g13" x="712"/><use href="#g1" x="720"/></g><g transform="translate(0 408)"><use href="#g5" x="0"/><use href="#g4" x="8"/><use href="#g7" x="72"/><use href="#g9" x="80"/><use href="#g12" x="88"/><use href="#g12" x="96"/><use href="#g6" x="144"/><use href="#g13" x="152"/><use href="#g9" x="160"/><use href="#g4" x="168"/><use href="#g6" x="216"/><use href="#g12" x="224"/><use href="#g4" x="232"/><use href="#g4" x="240"/><use href="#g4" x="248"/><use href="#g19" x="288"/><use href="#g41" x="296"/><use href="#g34" x="304"/><use href="#g48" x="312"/><use href="#g40" x="320"/><use href="#g38" x="328"/><use href="#g27" x="392"/><use href="#g46" x="400"/><use href="#g48" x="408"/><use href="#g44" x="416"/><use href="#g34" x="424"/><use href="#g43" x="432"/><use href="#g27" x="496"/><use href="#g46" x="504"/><use href="#g48" x="512"/><use href="#g44" x="520"/><use href="#g34" x="528"/><use href="#g43" x="536"/><use href="#g27" x="600"/><use href="#g46" x="608"/><use href="#g48" x="616"/><use href="#g44" x="624"/><use href="#g34" x="632"/><use href="#g43" x="640"/><use href="#g13" x="704"/><use href="#g13" x="712"/><use href="#g1" x="720"/></g><g transform="translate(0 420)"><use href="#g5" x="0"/><use href="#g5" x="8"/><use href="#g7" x="72"/><use href="#g9" x="80"/><use href="#g4" x="88"/><use href="#g10" x="96"/><use href="#g6" x="144"/><use href="#g13" x="152"/><use href="#g9" x="160"/><use href="#g4" x="168"/><use href="#g6" x="216"/><use href="#g12" x="224"/><use href="#g4" x="232"/><use href="#g4" x="240"/><use href="#g4" x="248"/><use href="#g19" x="288"/><use href="#g41" x="296"/><use href="#g34" x="304"/><use href="#g48" x="312"/><use href="#g40" x="320"/><use href="#g38" x="328"/><use href="#g27" x="392"/><use href="#g46" x="400"/><use href="#g48" x="408"/><use href="#g44" x="416"/><use href="#g34" x="424"/><use href="#g43" x="432"/><use href="#g27" x="496"/><use href="#g46" x="504"/><use href="#g48" x="512"/><use href="#g44" x="520"/><use href="#g34" x="528"/><use href="#g43" x="536"/><use href="#g27" x="600"/><use href="#g46" x="608"/><use href="#g48" x="616"/><use href="#g44" x="624"/><use href="#g34" x="632"/><use href="#g43" x="640"/><use href="#g13" x="704"/><use href="#g13" x="712"/><use href="#g1" x="720"/></g><g transform="translate(0 432)"><use href="#g5" x="0"/><use href="#g6" x="8"/><use href="#g7" x="72"/><use href="#g9" x="80"/><use href="#g4" x="88"/><use href="#g7" x="96"/><use href="#g6" x="144"/><use href="#g13" x="152"/><use href="#g9" x="160"/><use href="#g4" x="168"/><use href="#g6" x="216"/><use href="#g12" x="224"/><use href="#g4" x="232"/><use href="#g4" x="240"/><use href="#g4" x="248"/><use href="#g19" x="288"/><use href="#g41" x="296"/><use href="#g34" x="304"/><use href="#g48" x="312"/><use href="#g40" x="320"/><use href="#g38" x="328"/><use href="#g27" x="392"/><use href="#g46" x="400"/><use href="#g48" x="408"/><use href="#g44" x="416"/><use href="#g34" x="424"/><use href="#g43" x="432"/><use href="#g27" x="496"/><use href="#g46" x="504"/><use href="#g48" x="512"/><use href="#g44" x="520"/><use href="#g34" x="528"/><use href="#g43" x="536"/><use href="#g27" x="600"/><use href="#g46" x="608"/><use href="#g48" x="616"/><use href="#g44" x="624"/><use href="#g34" x="632"/><use href="#g43" x="640"/><use href="#g13" x="704"/><use href="#g13" x="712"/><use href="#g1" x="720"/></g><g transform="translate(0 444)"><use href="#g5" x="0"/><use href="#g7" x="8"/><use href="#g7" x="72"/><use href="#g8" x="80"/><use href="#g12" x="88"/><use href="#g13" x="96"/><use href="#g6" x="144"/><use href="#g13" x="152"/><use href="#g9" x="160"/><use href="#g4" x="168"/><use href="#g6" x="216"/><use href="#g12" x="224"/><use href="#g4" x="232"/><use href="#g4" x="240"/><use href="#g4" x="248"/><use href="#g19" x="288"/><use href="#g41" x="296"/><use href="#g34" x="304"/><use href="#g48" x="312"/><use href="#g40" x="320"/><use href="#g38" x="328"/><use href="#g27" x="392"/><use href="#g46" x="400"/><use href="#g48" x="408"/><use href="#g44" x="416"/><use href="#g34" x="424"/><use href="#g43" x="432"/><use href="#g27" x="496"/><use href="#g46" x="504"/><use href="#g48" x="512"/><use href="#g44" x="520"/><use href="#g34" x="528"/><use href="#g43" x="536"/><use href="#g27" x="600"/><use href="#g46" x="608"/><use href="#g48" x="616"/><use href="#g44" x="624"/><use href="#g34" x="632"/><use href="#g43" x="640"/><use href="#g13" x="704"/><use href="#g13" x="712"/><use href="#g1" x="720"/></g><g transform="translate(0 456)"><use href="#g5" x="0"/><use href="#g8" x="8"/><use href="#g7" x="72"/><use href="#g9" x="80"/><use href="#g5" x="88"/><use href="#g8" x="96"/><use href="#g6" x="144"/><use href="#g13" x="152"/><use href="#g9" x="160"/><use href="#g4" x="168"/><use href="#g6" x="216"/><use href="#g12" x="224"/><use href="#g4" x="232"/><use href="#g4" x="240"/><use href="#g4" x="248"/><use href="#g19" x="288"/><use href="#g41" x="296"/><use href="#g34" x="304"/><use href="#g48" x="312"/><use href="#g40" x="320"/><use href="#g38" x="328"/><use href="#g27" x="392"/><use href="#g46" x="400"/><use href="#g48" x="408"/><use href="#g44" x="416"/><use href="#g34" x="424"/><use href="#g43" x="432"/><use href="#g27" x="496"/><use href="#g46" x="504"/><use href="#g48" x="512"/><use href="#g44" x="520"/><use href="#g34" x="528"/><use href="#g43" x="536"/><use href="#g27" x="600"/><use href="#g46" x="608"/><use href="#g48" x="616"/><use href="#g44" x="624"/><use href="#g34" x="632"/><use href="#g43" x="640"/><use href="#g13" x="704"/><use href="#g13" x="712"/><use href="#g1" x="720"/></g><g transform="translate(0 468)"><use href="#g19" x="0"/><use href="#g46" x="8"/><use href="#g44" x="16"/><use href="#g44" x="24"/><use href="#g34" x="32"/><use href="#g45" x="40"/><use href="#g37" x="48"/><use href="#g36" x="64"/><use href="#g46" x="72"/><use href="#g44" x="80"/><use href="#g47" x="88"/><use href="#g43" x="96"/><use href="#g38" x="104"/><use href="#g50" x="112"/><use href="#g38" x="120"/><use href="#g37" x="128"/><use href="#g49" x="144"/><use href="#g51" x="152"/><use href="#g36" x="160"/><use href="#g36" x="168"/><use href="#g38" x="176"/><use href="#g49" x="184"/><use href="#g49" x="192"/><use href="#g39" x="200"/><use href="#g51" x="208"/><use href="#g43" x="216"/><use href="#g43" x="224"/><use href="#g55" x="232"/></g><g transform="translate(0 480)"><use href="#g0" x="0"/><use href="#g0" x="8"/></g><g transform="translate(0 492)"><use href="#g47" x="0"/><use href="#g55" x="8"/><use href="#g43" x="16"/><use href="#g46" x="24"/><use href="#g45" x="32"/><use href="#g15" x="40"/></g></svg><div class="b" style="left:48px;top:264px;width:8px;height:12px;background:#fff"></div><div class="b" style="left:272px;top:300px;width:8px;height:12px;background:#ffff00"></div></div><div class="b" style="left:892px;top:33px;width:17px;height:508px;background:#f0f0f0;border-left:1px solid #fff;"></div><div class="b" style="left:893px;top:424px;width:15px;height:100px;background:#cdcdcd;"></div><div class="b" style="left:3px;top:541px;width:889px;height:17px;background:#f0f0f0;border-top:1px solid #fff;"></div><div class="b" style="left:20px;top:542px;width:833px;height:15px;background:#cdcdcd;"></div><svg class="b" style="left:897px;top:39px" width="7" height="6" shape-rendering="crispEdges"><rect x="0" y="3" width="1" height="3" fill="#606060"/><rect x="1" y="2" width="1" height="3" fill="#606060"/><rect x="2" y="1" width="1" height="3" fill="#606060"/><rect x="3" y="0" width="1" height="3" fill="#606060"/><rect x="4" y="1" width="1" height="3" fill="#606060"/><rect x="5" y="2" width="1" height="3" fill="#606060"/><rect x="6" y="3" width="1" height="3" fill="#606060"/></svg><svg class="b" style="left:897px;top:530px" width="7" height="6" shape-rendering="crispEdges"><rect x="0" y="0" width="1" height="3" fill="#606060"/><rect x="1" y="1" width="1" height="3" fill="#606060"/><rect x="2" y="2" width="1" height="3" fill="#606060"/><rect x="3" y="3" width="1" height="3" fill="#606060"/><rect x="4" y="2" width="1" height="3" fill="#606060"/><rect x="5" y="1" width="1" height="3" fill="#606060"/><rect x="6" y="0" width="1" height="3" fill="#606060"/></svg><svg class="b" style="left:8px;top:546px" width="6" height="7" shape-rendering="crispEdges"><rect x="3" y="0" width="3" height="1" fill="#606060"/><rect x="2" y="1" width="3" height="1" fill="#606060"/><rect x="1" y="2" width="3" height="1" fill="#606060"/><rect x="0" y="3" width="3" height="1" fill="#606060"/><rect x="1" y="4" width="3" height="1" fill="#606060"/><rect x="2" y="5" width="3" height="1" fill="#606060"/><rect x="3" y="6" width="3" height="1" fill="#606060"/></svg><svg class="b" style="left:881px;top:546px" width="6" height="7" shape-rendering="crispEdges"><rect x="0" y="0" width="3" height="1" fill="#606060"/><rect x="1" y="1" width="3" height="1" fill="#606060"/><rect x="2" y="2" width="3" height="1" fill="#606060"/><rect x="3" y="3" width="3" height="1" fill="#606060"/><rect x="2" y="4" width="3" height="1" fill="#606060"/><rect x="1" y="5" width="3" height="1" fill="#606060"/><rect x="0" y="6" width="3" height="1" fill="#606060"/></svg><div class="b" style="left:1px;top:580px;width:908px;height:1px;background:#fff;"></div><div class="b" style="left:4px;top:562px;width:44px;height:18px;border-left:1px solid #fff;border-top:1px solid #fff;"></div><div class="u" style="left:9px;top:566px;">Display</div><div class="b" style="left:48px;top:561px;width:45px;height:21px;background:#f0f0f0;border-left:1px solid #fff;border-top:1px solid #fff;border-right:1px solid #696969;box-shadow: inset -1px 0 0 #a0a0a0;"></div><div class="u" style="left:55px;top:564px;">Port</div><div class="b" style="left:93px;top:562px;width:47px;height:18px;border-left:1px solid #fff;border-top:1px solid #fff;border-right:1px solid #696969;box-shadow: inset -1px 0 0 #a0a0a0;"></div><div class="u" style="left:97px;top:566px;">Capture</div><div class="b" style="left:141px;top:562px;width:41px;height:18px;border-left:1px solid #fff;border-top:1px solid #fff;border-right:1px solid #696969;box-shadow: inset -1px 0 0 #a0a0a0;"></div><div class="u" style="left:146px;top:566px;">Pins</div><div class="b" style="left:183px;top:562px;width:41px;height:18px;border-left:1px solid #fff;border-top:1px solid #fff;border-right:1px solid #696969;box-shadow: inset -1px 0 0 #a0a0a0;"></div><div class="u" style="left:188px;top:566px;">Send</div><div class="b" style="left:225px;top:562px;width:58px;height:18px;border-left:1px solid #fff;border-top:1px solid #fff;border-right:1px solid #696969;box-shadow: inset -1px 0 0 #a0a0a0;"></div><div class="u" style="left:229px;top:566px;">Echo Port</div><div class="b" style="left:284px;top:562px;width:41px;height:18px;border-left:1px solid #fff;border-top:1px solid #fff;border-right:1px solid #696969;box-shadow: inset -1px 0 0 #a0a0a0;"></div><div class="u" style="left:288px;top:566px;">I2C</div><div class="b" style="left:326px;top:562px;width:41px;height:18px;border-left:1px solid #fff;border-top:1px solid #fff;border-right:1px solid #696969;box-shadow: inset -1px 0 0 #a0a0a0;"></div><div class="u" style="left:330px;top:566px;">I2C-2</div><div class="b" style="left:368px;top:562px;width:49px;height:18px;border-left:1px solid #fff;border-top:1px solid #fff;border-right:1px solid #696969;box-shadow: inset -1px 0 0 #a0a0a0;"></div><div class="u" style="left:372px;top:566px;">I2CMisc</div><div class="b" style="left:418px;top:562px;width:41px;height:18px;border-left:1px solid #fff;border-top:1px solid #fff;border-right:1px solid #696969;box-shadow: inset -1px 0 0 #a0a0a0;"></div><div class="u" style="left:422px;top:566px;">Misc</div><div class="b" style="left:748px;top:561px;width:20px;height:17px;background:#f0f0f0;box-shadow: inset -1px -1px 0 #696969, inset 1px 1px 0 #fff, inset -2px -2px 0 #a0a0a0, inset 2px 2px 0 #e3e3e3;"></div><div class="b" style="left:774px;top:561px;width:40px;height:17px;background:#f0f0f0;box-shadow: inset -1px -1px 0 #696969, inset 1px 1px 0 #fff, inset -2px -2px 0 #a0a0a0, inset 2px 2px 0 #e3e3e3;"></div><div class="b" style="left:818px;top:561px;width:54px;height:17px;background:#f0f0f0;box-shadow: inset -1px -1px 0 #696969, inset 1px 1px 0 #fff, inset -2px -2px 0 #a0a0a0, inset 2px 2px 0 #e3e3e3;"></div><div class="b" style="left:878px;top:561px;width:17px;height:17px;background:#f0f0f0;box-shadow: inset -1px -1px 0 #696969, inset 1px 1px 0 #fff, inset -2px -2px 0 #a0a0a0, inset 2px 2px 0 #e3e3e3;"></div><div class="s" style="left:775.5px;top:562.15px;font-size:14px;line-height:14px;font-weight:bold;letter-spacing:0.5px">Clear</div><div class="s" style="left:820.5px;top:562.15px;font-size:14px;line-height:14px;font-weight:bold;letter-spacing:0.5px">Freeze</div><svg class="b" style="left:748px;top:561px" width="20" height="17" shape-rendering="crispEdges"><rect x="3" y="3" width="2" height="3" fill="#000"/><rect x="4" y="6" width="2" height="2" fill="#000"/><rect x="5" y="8" width="2" height="2" fill="#000"/><rect x="6" y="10" width="2" height="2" fill="#000"/><rect x="7" y="12" width="2" height="3" fill="#000"/><rect x="9" y="6" width="5" height="2" fill="#000"/><rect x="9" y="8" width="2" height="5" fill="#000"/><rect x="13" y="7" width="2" height="6" fill="#000"/></svg><svg class="b" style="left:878px;top:561px" width="17" height="17" shape-rendering="crispEdges"><rect x="7" y="3" width="3" height="1" fill="#000"/><rect x="6" y="4" width="1" height="1" fill="#000"/><rect x="10" y="4" width="1" height="2" fill="#000"/><rect x="9" y="6" width="1" height="2" fill="#000"/><rect x="8" y="8" width="1" height="2" fill="#000"/><rect x="8" y="11" width="1" height="1" fill="#000"/></svg><div class="b" style="left:1px;top:581px;width:909px;height:172px;border-left:1px solid #fff;border-right:1px solid #696969;border-bottom:1px solid #696969;box-shadow: inset -1px -1px 0 #a0a0a0;"></div><div class="b" style="left:7px;top:589px;width:460px;height:156px;border-top:1px solid #a0a0a0;border-left:1px solid #a0a0a0;border-right:1px solid #fff;border-bottom:1px solid #fff;box-shadow: inset -1px -1px 0 #a0a0a0, inset 1px 1px 0 #fff;"></div><div class="u" style="left:10px;top:603px;"><u>B</u>aud</div><div class="b" style="left:40px;top:598px;width:66px;height:20px;background:#fff;box-shadow: inset 1px 1px 0 #a0a0a0, inset -1px -1px 0 #fff, inset 2px 2px 0 #696969, inset -2px -2px 0 #e3e3e3;"></div><div class="u" style="left:43px;top:603px;">115200</div><div class="b" style="left:88px;top:600px;width:17px;height:17px;background:#f0f0f0;box-shadow: inset -1px -1px 0 #696969, inset 1px 1px 0 #e3e3e3, inset -2px -2px 0 #a0a0a0, inset 2px 2px 0 #fff;"></div><svg class="b" style="left:93px;top:607px" width="7" height="4" shape-rendering="crispEdges"><rect x="0" y="0" width="7" height="1" fill="#000"/><rect x="1" y="1" width="5" height="1" fill="#000"/><rect x="2" y="2" width="3" height="1" fill="#000"/><rect x="3" y="3" width="1" height="1" fill="#000"/></svg><div class="u" style="left:108px;top:603px;"><u>P</u>ort</div><div class="b" style="left:132px;top:598px;width:158px;height:20px;background:#fff;box-shadow: inset 1px 1px 0 #a0a0a0, inset -1px -1px 0 #fff, inset 2px 2px 0 #696969, inset -2px -2px 0 #e3e3e3;"></div><div class="u" style="left:135px;top:603px;">3</div><div class="b" style="left:272px;top:600px;width:17px;height:17px;background:#f0f0f0;box-shadow: inset -1px -1px 0 #696969, inset 1px 1px 0 #e3e3e3, inset -2px -2px 0 #a0a0a0, inset 2px 2px 0 #fff;"></div><svg class="b" style="left:277px;top:607px" width="7" height="4" shape-rendering="crispEdges"><rect x="0" y="0" width="7" height="1" fill="#000"/><rect x="1" y="1" width="5" height="1" fill="#000"/><rect x="2" y="2" width="3" height="1" fill="#000"/><rect x="3" y="3" width="1" height="1" fill="#000"/></svg><div class="b" style="left:300px;top:597px;width:33px;height:20px;background:repeating-conic-gradient(#fff 0 25%, #f0f0f0 0 50%) 0 0/2px 2px;box-shadow: inset 1px 1px 0 #696969, inset -1px -1px 0 #fff, inset 2px 2px 0 #a0a0a0, inset -2px -2px 0 #e3e3e3;"></div><div class="u" style="left:305px;top:603px;"><u>O</u>pen</div><div class="b" style="left:339px;top:597px;width:26px;height:20px;background:#f0f0f0;box-shadow: inset -1px -1px 0 #696969, inset 1px 1px 0 #fff, inset -2px -2px 0 #a0a0a0, inset 2px 2px 0 #e3e3e3;"></div><div class="u" style="left:343px;top:602px;">Sp<u>y</u></div><div class="b" style="left:372px;top:594px;width:76px;height:24px;background:#f0f0f0;border:1px solid #646464;box-shadow: inset -1px -1px 0 #696969, inset 1px 1px 0 #fff, inset -2px -2px 0 #a0a0a0, inset 2px 2px 0 #e3e3e3;"></div><svg class="b" style="left:380px;top:597px" width="19" height="17" viewBox="0 0 19 17"><path d="M1.5 9.5 L6 14 L16.5 3.5" stroke="#000080" stroke-width="3" fill="none"/><path d="M1.5 8.5 L6 13 L16.5 2.5" stroke="#00e000" stroke-width="2.6" fill="none"/></svg><div class="u" style="left:401px;top:601px;"><u>C</u>hange</div><div class="b" style="left:449px;top:596px;width:13px;height:13px;background:#fff;box-shadow: inset 1px 1px 0 #a0a0a0, inset -1px -1px 0 #fff, inset 2px 2px 0 #696969, inset -2px -2px 0 #e3e3e3;"></div><svg class="b" style="left:449px;top:596px" width="13" height="13" shape-rendering="crispEdges"><rect x="3" y="5" width="1" height="3" fill="#000"/><rect x="4" y="6" width="1" height="3" fill="#000"/><rect x="5" y="7" width="1" height="3" fill="#000"/><rect x="6" y="6" width="1" height="3" fill="#000"/><rect x="7" y="5" width="1" height="3" fill="#000"/><rect x="8" y="4" width="1" height="3" fill="#000"/><rect x="9" y="3" width="1" height="3" fill="#000"/></svg><div class="b" style="left:16px;top:635px;width:63px;height:79px;border:1px solid #fff;"></div><div class="b" style="left:15px;top:634px;width:63px;height:79px;border:1px solid #a0a0a0;"></div><div class="u" style="left:22px;top:630px;background:#f0f0f0;padding:0 1px 0 1px;height:11px">P<u>a</u>rity</div><svg class="b" style="left:24px;top:644px" width="12" height="12" shape-rendering="crispEdges"><rect x="3" y="2" width="6" height="8" fill="#ffffff"/><rect x="2" y="3" width="8" height="6" fill="#ffffff"/><rect x="4" y="0" width="4" height="1" fill="#a0a0a0"/><rect x="2" y="1" width="2" height="1" fill="#a0a0a0"/><rect x="8" y="1" width="2" height="1" fill="#a0a0a0"/><rect x="1" y="2" width="1" height="2" fill="#a0a0a0"/><rect x="0" y="4" width="1" height="4" fill="#a0a0a0"/><rect x="1" y="8" width="1" height="2" fill="#a0a0a0"/><rect x="10" y="2" width="1" height="2" fill="#ffffff"/><rect x="11" y="4" width="1" height="4" fill="#ffffff"/><rect x="10" y="8" width="1" height="2" fill="#ffffff"/><rect x="2" y="10" width="2" height="1" fill="#ffffff"/><rect x="8" y="10" width="2" height="1" fill="#ffffff"/><rect x="4" y="11" width="4" height="1" fill="#ffffff"/><rect x="4" y="1" width="4" height="1" fill="#696969"/><rect x="2" y="2" width="2" height="1" fill="#696969"/><rect x="8" y="2" width="2" height="1" fill="#696969"/><rect x="2" y="3" width="1" height="1" fill="#696969"/><rect x="1" y="4" width="1" height="4" fill="#696969"/><rect x="2" y="8" width="1" height="1" fill="#696969"/><rect x="9" y="3" width="1" height="1" fill="#e3e3e3"/><rect x="10" y="4" width="1" height="4" fill="#e3e3e3"/><rect x="9" y="8" width="1" height="1" fill="#e3e3e3"/><rect x="2" y="9" width="2" height="1" fill="#e3e3e3"/><rect x="8" y="9" width="2" height="1" fill="#e3e3e3"/><rect x="4" y="10" width="4" height="1" fill="#e3e3e3"/><rect x="5" y="4" width="2" height="1" fill="#000"/><rect x="4" y="5" width="4" height="2" fill="#000"/><rect x="5" y="7" width="2" height="1" fill="#000"/></svg><div class="u" style="left:41px;top:645px;">None</div><svg class="b" style="left:24px;top:657px" width="12" height="12" shape-rendering="crispEdges"><rect x="3" y="2" width="6" height="8" fill="#ffffff"/><rect x="2" y="3" width="8" height="6" fill="#ffffff"/><rect x="4" y="0" width="4" height="1" fill="#a0a0a0"/><rect x="2" y="1" width="2" height="1" fill="#a0a0a0"/><rect x="8" y="1" width="2" height="1" fill="#a0a0a0"/><rect x="1" y="2" width="1" height="2" fill="#a0a0a0"/><rect x="0" y="4" width="1" height="4" fill="#a0a0a0"/><rect x="1" y="8" width="1" height="2" fill="#a0a0a0"/><rect x="10" y="2" width="1" height="2" fill="#ffffff"/><rect x="11" y="4" width="1" height="4" fill="#ffffff"/><rect x="10" y="8" width="1" height="2" fill="#ffffff"/><rect x="2" y="10" width="2" height="1" fill="#ffffff"/><rect x="8" y="10" width="2" height="1" fill="#ffffff"/><rect x="4" y="11" width="4" height="1" fill="#ffffff"/><rect x="4" y="1" width="4" height="1" fill="#696969"/><rect x="2" y="2" width="2" height="1" fill="#696969"/><rect x="8" y="2" width="2" height="1" fill="#696969"/><rect x="2" y="3" width="1" height="1" fill="#696969"/><rect x="1" y="4" width="1" height="4" fill="#696969"/><rect x="2" y="8" width="1" height="1" fill="#696969"/><rect x="9" y="3" width="1" height="1" fill="#e3e3e3"/><rect x="10" y="4" width="1" height="4" fill="#e3e3e3"/><rect x="9" y="8" width="1" height="1" fill="#e3e3e3"/><rect x="2" y="9" width="2" height="1" fill="#e3e3e3"/><rect x="8" y="9" width="2" height="1" fill="#e3e3e3"/><rect x="4" y="10" width="4" height="1" fill="#e3e3e3"/></svg><div class="u" style="left:41px;top:658px;">Odd</div><svg class="b" style="left:24px;top:670px" width="12" height="12" shape-rendering="crispEdges"><rect x="3" y="2" width="6" height="8" fill="#ffffff"/><rect x="2" y="3" width="8" height="6" fill="#ffffff"/><rect x="4" y="0" width="4" height="1" fill="#a0a0a0"/><rect x="2" y="1" width="2" height="1" fill="#a0a0a0"/><rect x="8" y="1" width="2" height="1" fill="#a0a0a0"/><rect x="1" y="2" width="1" height="2" fill="#a0a0a0"/><rect x="0" y="4" width="1" height="4" fill="#a0a0a0"/><rect x="1" y="8" width="1" height="2" fill="#a0a0a0"/><rect x="10" y="2" width="1" height="2" fill="#ffffff"/><rect x="11" y="4" width="1" height="4" fill="#ffffff"/><rect x="10" y="8" width="1" height="2" fill="#ffffff"/><rect x="2" y="10" width="2" height="1" fill="#ffffff"/><rect x="8" y="10" width="2" height="1" fill="#ffffff"/><rect x="4" y="11" width="4" height="1" fill="#ffffff"/><rect x="4" y="1" width="4" height="1" fill="#696969"/><rect x="2" y="2" width="2" height="1" fill="#696969"/><rect x="8" y="2" width="2" height="1" fill="#696969"/><rect x="2" y="3" width="1" height="1" fill="#696969"/><rect x="1" y="4" width="1" height="4" fill="#696969"/><rect x="2" y="8" width="1" height="1" fill="#696969"/><rect x="9" y="3" width="1" height="1" fill="#e3e3e3"/><rect x="10" y="4" width="1" height="4" fill="#e3e3e3"/><rect x="9" y="8" width="1" height="1" fill="#e3e3e3"/><rect x="2" y="9" width="2" height="1" fill="#e3e3e3"/><rect x="8" y="9" width="2" height="1" fill="#e3e3e3"/><rect x="4" y="10" width="4" height="1" fill="#e3e3e3"/></svg><div class="u" style="left:41px;top:671px;">Even</div><svg class="b" style="left:24px;top:683px" width="12" height="12" shape-rendering="crispEdges"><rect x="3" y="2" width="6" height="8" fill="#ffffff"/><rect x="2" y="3" width="8" height="6" fill="#ffffff"/><rect x="4" y="0" width="4" height="1" fill="#a0a0a0"/><rect x="2" y="1" width="2" height="1" fill="#a0a0a0"/><rect x="8" y="1" width="2" height="1" fill="#a0a0a0"/><rect x="1" y="2" width="1" height="2" fill="#a0a0a0"/><rect x="0" y="4" width="1" height="4" fill="#a0a0a0"/><rect x="1" y="8" width="1" height="2" fill="#a0a0a0"/><rect x="10" y="2" width="1" height="2" fill="#ffffff"/><rect x="11" y="4" width="1" height="4" fill="#ffffff"/><rect x="10" y="8" width="1" height="2" fill="#ffffff"/><rect x="2" y="10" width="2" height="1" fill="#ffffff"/><rect x="8" y="10" width="2" height="1" fill="#ffffff"/><rect x="4" y="11" width="4" height="1" fill="#ffffff"/><rect x="4" y="1" width="4" height="1" fill="#696969"/><rect x="2" y="2" width="2" height="1" fill="#696969"/><rect x="8" y="2" width="2" height="1" fill="#696969"/><rect x="2" y="3" width="1" height="1" fill="#696969"/><rect x="1" y="4" width="1" height="4" fill="#696969"/><rect x="2" y="8" width="1" height="1" fill="#696969"/><rect x="9" y="3" width="1" height="1" fill="#e3e3e3"/><rect x="10" y="4" width="1" height="4" fill="#e3e3e3"/><rect x="9" y="8" width="1" height="1" fill="#e3e3e3"/><rect x="2" y="9" width="2" height="1" fill="#e3e3e3"/><rect x="8" y="9" width="2" height="1" fill="#e3e3e3"/><rect x="4" y="10" width="4" height="1" fill="#e3e3e3"/></svg><div class="u" style="left:41px;top:684px;">Mark</div><svg class="b" style="left:24px;top:696px" width="12" height="12" shape-rendering="crispEdges"><rect x="3" y="2" width="6" height="8" fill="#ffffff"/><rect x="2" y="3" width="8" height="6" fill="#ffffff"/><rect x="4" y="0" width="4" height="1" fill="#a0a0a0"/><rect x="2" y="1" width="2" height="1" fill="#a0a0a0"/><rect x="8" y="1" width="2" height="1" fill="#a0a0a0"/><rect x="1" y="2" width="1" height="2" fill="#a0a0a0"/><rect x="0" y="4" width="1" height="4" fill="#a0a0a0"/><rect x="1" y="8" width="1" height="2" fill="#a0a0a0"/><rect x="10" y="2" width="1" height="2" fill="#ffffff"/><rect x="11" y="4" width="1" height="4" fill="#ffffff"/><rect x="10" y="8" width="1" height="2" fill="#ffffff"/><rect x="2" y="10" width="2" height="1" fill="#ffffff"/><rect x="8" y="10" width="2" height="1" fill="#ffffff"/><rect x="4" y="11" width="4" height="1" fill="#ffffff"/><rect x="4" y="1" width="4" height="1" fill="#696969"/><rect x="2" y="2" width="2" height="1" fill="#696969"/><rect x="8" y="2" width="2" height="1" fill="#696969"/><rect x="2" y="3" width="1" height="1" fill="#696969"/><rect x="1" y="4" width="1" height="4" fill="#696969"/><rect x="2" y="8" width="1" height="1" fill="#696969"/><rect x="9" y="3" width="1" height="1" fill="#e3e3e3"/><rect x="10" y="4" width="1" height="4" fill="#e3e3e3"/><rect x="9" y="8" width="1" height="1" fill="#e3e3e3"/><rect x="2" y="9" width="2" height="1" fill="#e3e3e3"/><rect x="8" y="9" width="2" height="1" fill="#e3e3e3"/><rect x="4" y="10" width="4" height="1" fill="#e3e3e3"/></svg><div class="u" style="left:41px;top:697px;">Space</div><div class="b" style="left:81px;top:635px;width:57px;height:79px;border:1px solid #fff;"></div><div class="b" style="left:80px;top:634px;width:57px;height:79px;border:1px solid #a0a0a0;"></div><div class="u" style="left:88px;top:630px;background:#f0f0f0;padding:0 1px 0 1px;height:11px"><u>D</u>ata Bits</div><svg class="b" style="left:89px;top:645px" width="12" height="12" shape-rendering="crispEdges"><rect x="3" y="2" width="6" height="8" fill="#ffffff"/><rect x="2" y="3" width="8" height="6" fill="#ffffff"/><rect x="4" y="0" width="4" height="1" fill="#a0a0a0"/><rect x="2" y="1" width="2" height="1" fill="#a0a0a0"/><rect x="8" y="1" width="2" height="1" fill="#a0a0a0"/><rect x="1" y="2" width="1" height="2" fill="#a0a0a0"/><rect x="0" y="4" width="1" height="4" fill="#a0a0a0"/><rect x="1" y="8" width="1" height="2" fill="#a0a0a0"/><rect x="10" y="2" width="1" height="2" fill="#ffffff"/><rect x="11" y="4" width="1" height="4" fill="#ffffff"/><rect x="10" y="8" width="1" height="2" fill="#ffffff"/><rect x="2" y="10" width="2" height="1" fill="#ffffff"/><rect x="8" y="10" width="2" height="1" fill="#ffffff"/><rect x="4" y="11" width="4" height="1" fill="#ffffff"/><rect x="4" y="1" width="4" height="1" fill="#696969"/><rect x="2" y="2" width="2" height="1" fill="#696969"/><rect x="8" y="2" width="2" height="1" fill="#696969"/><rect x="2" y="3" width="1" height="1" fill="#696969"/><rect x="1" y="4" width="1" height="4" fill="#696969"/><rect x="2" y="8" width="1" height="1" fill="#696969"/><rect x="9" y="3" width="1" height="1" fill="#e3e3e3"/><rect x="10" y="4" width="1" height="4" fill="#e3e3e3"/><rect x="9" y="8" width="1" height="1" fill="#e3e3e3"/><rect x="2" y="9" width="2" height="1" fill="#e3e3e3"/><rect x="8" y="9" width="2" height="1" fill="#e3e3e3"/><rect x="4" y="10" width="4" height="1" fill="#e3e3e3"/><rect x="5" y="4" width="2" height="1" fill="#000"/><rect x="4" y="5" width="4" height="2" fill="#000"/><rect x="5" y="7" width="2" height="1" fill="#000"/></svg><div class="u" style="left:106px;top:646px;">8 bits</div><svg class="b" style="left:89px;top:661px" width="12" height="12" shape-rendering="crispEdges"><rect x="3" y="2" width="6" height="8" fill="#ffffff"/><rect x="2" y="3" width="8" height="6" fill="#ffffff"/><rect x="4" y="0" width="4" height="1" fill="#a0a0a0"/><rect x="2" y="1" width="2" height="1" fill="#a0a0a0"/><rect x="8" y="1" width="2" height="1" fill="#a0a0a0"/><rect x="1" y="2" width="1" height="2" fill="#a0a0a0"/><rect x="0" y="4" width="1" height="4" fill="#a0a0a0"/><rect x="1" y="8" width="1" height="2" fill="#a0a0a0"/><rect x="10" y="2" width="1" height="2" fill="#ffffff"/><rect x="11" y="4" width="1" height="4" fill="#ffffff"/><rect x="10" y="8" width="1" height="2" fill="#ffffff"/><rect x="2" y="10" width="2" height="1" fill="#ffffff"/><rect x="8" y="10" width="2" height="1" fill="#ffffff"/><rect x="4" y="11" width="4" height="1" fill="#ffffff"/><rect x="4" y="1" width="4" height="1" fill="#696969"/><rect x="2" y="2" width="2" height="1" fill="#696969"/><rect x="8" y="2" width="2" height="1" fill="#696969"/><rect x="2" y="3" width="1" height="1" fill="#696969"/><rect x="1" y="4" width="1" height="4" fill="#696969"/><rect x="2" y="8" width="1" height="1" fill="#696969"/><rect x="9" y="3" width="1" height="1" fill="#e3e3e3"/><rect x="10" y="4" width="1" height="4" fill="#e3e3e3"/><rect x="9" y="8" width="1" height="1" fill="#e3e3e3"/><rect x="2" y="9" width="2" height="1" fill="#e3e3e3"/><rect x="8" y="9" width="2" height="1" fill="#e3e3e3"/><rect x="4" y="10" width="4" height="1" fill="#e3e3e3"/></svg><div class="u" style="left:106px;top:662px;">7 bits</div><svg class="b" style="left:89px;top:676px" width="12" height="12" shape-rendering="crispEdges"><rect x="3" y="2" width="6" height="8" fill="#ffffff"/><rect x="2" y="3" width="8" height="6" fill="#ffffff"/><rect x="4" y="0" width="4" height="1" fill="#a0a0a0"/><rect x="2" y="1" width="2" height="1" fill="#a0a0a0"/><rect x="8" y="1" width="2" height="1" fill="#a0a0a0"/><rect x="1" y="2" width="1" height="2" fill="#a0a0a0"/><rect x="0" y="4" width="1" height="4" fill="#a0a0a0"/><rect x="1" y="8" width="1" height="2" fill="#a0a0a0"/><rect x="10" y="2" width="1" height="2" fill="#ffffff"/><rect x="11" y="4" width="1" height="4" fill="#ffffff"/><rect x="10" y="8" width="1" height="2" fill="#ffffff"/><rect x="2" y="10" width="2" height="1" fill="#ffffff"/><rect x="8" y="10" width="2" height="1" fill="#ffffff"/><rect x="4" y="11" width="4" height="1" fill="#ffffff"/><rect x="4" y="1" width="4" height="1" fill="#696969"/><rect x="2" y="2" width="2" height="1" fill="#696969"/><rect x="8" y="2" width="2" height="1" fill="#696969"/><rect x="2" y="3" width="1" height="1" fill="#696969"/><rect x="1" y="4" width="1" height="4" fill="#696969"/><rect x="2" y="8" width="1" height="1" fill="#696969"/><rect x="9" y="3" width="1" height="1" fill="#e3e3e3"/><rect x="10" y="4" width="1" height="4" fill="#e3e3e3"/><rect x="9" y="8" width="1" height="1" fill="#e3e3e3"/><rect x="2" y="9" width="2" height="1" fill="#e3e3e3"/><rect x="8" y="9" width="2" height="1" fill="#e3e3e3"/><rect x="4" y="10" width="4" height="1" fill="#e3e3e3"/></svg><div class="u" style="left:106px;top:678px;">6 bits</div><svg class="b" style="left:89px;top:692px" width="12" height="12" shape-rendering="crispEdges"><rect x="3" y="2" width="6" height="8" fill="#ffffff"/><rect x="2" y="3" width="8" height="6" fill="#ffffff"/><rect x="4" y="0" width="4" height="1" fill="#a0a0a0"/><rect x="2" y="1" width="2" height="1" fill="#a0a0a0"/><rect x="8" y="1" width="2" height="1" fill="#a0a0a0"/><rect x="1" y="2" width="1" height="2" fill="#a0a0a0"/><rect x="0" y="4" width="1" height="4" fill="#a0a0a0"/><rect x="1" y="8" width="1" height="2" fill="#a0a0a0"/><rect x="10" y="2" width="1" height="2" fill="#ffffff"/><rect x="11" y="4" width="1" height="4" fill="#ffffff"/><rect x="10" y="8" width="1" height="2" fill="#ffffff"/><rect x="2" y="10" width="2" height="1" fill="#ffffff"/><rect x="8" y="10" width="2" height="1" fill="#ffffff"/><rect x="4" y="11" width="4" height="1" fill="#ffffff"/><rect x="4" y="1" width="4" height="1" fill="#696969"/><rect x="2" y="2" width="2" height="1" fill="#696969"/><rect x="8" y="2" width="2" height="1" fill="#696969"/><rect x="2" y="3" width="1" height="1" fill="#696969"/><rect x="1" y="4" width="1" height="4" fill="#696969"/><rect x="2" y="8" width="1" height="1" fill="#696969"/><rect x="9" y="3" width="1" height="1" fill="#e3e3e3"/><rect x="10" y="4" width="1" height="4" fill="#e3e3e3"/><rect x="9" y="8" width="1" height="1" fill="#e3e3e3"/><rect x="2" y="9" width="2" height="1" fill="#e3e3e3"/><rect x="8" y="9" width="2" height="1" fill="#e3e3e3"/><rect x="4" y="10" width="4" height="1" fill="#e3e3e3"/></svg><div class="u" style="left:106px;top:694px;">5 bits</div><div class="b" style="left:144px;top:635px;width:152px;height:29px;border:1px solid #fff;"></div><div class="b" style="left:143px;top:634px;width:152px;height:29px;border:1px solid #a0a0a0;"></div><div class="u" style="left:151px;top:630px;background:#f0f0f0;padding:0 1px 0 1px;height:11px"><u>S</u>top Bits</div><svg class="b" style="left:152px;top:645px" width="12" height="12" shape-rendering="crispEdges"><rect x="3" y="2" width="6" height="8" fill="#ffffff"/><rect x="2" y="3" width="8" height="6" fill="#ffffff"/><rect x="4" y="0" width="4" height="1" fill="#a0a0a0"/><rect x="2" y="1" width="2" height="1" fill="#a0a0a0"/><rect x="8" y="1" width="2" height="1" fill="#a0a0a0"/><rect x="1" y="2" width="1" height="2" fill="#a0a0a0"/><rect x="0" y="4" width="1" height="4" fill="#a0a0a0"/><rect x="1" y="8" width="1" height="2" fill="#a0a0a0"/><rect x="10" y="2" width="1" height="2" fill="#ffffff"/><rect x="11" y="4" width="1" height="4" fill="#ffffff"/><rect x="10" y="8" width="1" height="2" fill="#ffffff"/><rect x="2" y="10" width="2" height="1" fill="#ffffff"/><rect x="8" y="10" width="2" height="1" fill="#ffffff"/><rect x="4" y="11" width="4" height="1" fill="#ffffff"/><rect x="4" y="1" width="4" height="1" fill="#696969"/><rect x="2" y="2" width="2" height="1" fill="#696969"/><rect x="8" y="2" width="2" height="1" fill="#696969"/><rect x="2" y="3" width="1" height="1" fill="#696969"/><rect x="1" y="4" width="1" height="4" fill="#696969"/><rect x="2" y="8" width="1" height="1" fill="#696969"/><rect x="9" y="3" width="1" height="1" fill="#e3e3e3"/><rect x="10" y="4" width="1" height="4" fill="#e3e3e3"/><rect x="9" y="8" width="1" height="1" fill="#e3e3e3"/><rect x="2" y="9" width="2" height="1" fill="#e3e3e3"/><rect x="8" y="9" width="2" height="1" fill="#e3e3e3"/><rect x="4" y="10" width="4" height="1" fill="#e3e3e3"/><rect x="5" y="4" width="2" height="1" fill="#000"/><rect x="4" y="5" width="4" height="2" fill="#000"/><rect x="5" y="7" width="2" height="1" fill="#000"/></svg><div class="u" style="left:170px;top:645px;">1 bit</div><svg class="b" style="left:223px;top:645px" width="12" height="12" shape-rendering="crispEdges"><rect x="3" y="2" width="6" height="8" fill="#ffffff"/><rect x="2" y="3" width="8" height="6" fill="#ffffff"/><rect x="4" y="0" width="4" height="1" fill="#a0a0a0"/><rect x="2" y="1" width="2" height="1" fill="#a0a0a0"/><rect x="8" y="1" width="2" height="1" fill="#a0a0a0"/><rect x="1" y="2" width="1" height="2" fill="#a0a0a0"/><rect x="0" y="4" width="1" height="4" fill="#a0a0a0"/><rect x="1" y="8" width="1" height="2" fill="#a0a0a0"/><rect x="10" y="2" width="1" height="2" fill="#ffffff"/><rect x="11" y="4" width="1" height="4" fill="#ffffff"/><rect x="10" y="8" width="1" height="2" fill="#ffffff"/><rect x="2" y="10" width="2" height="1" fill="#ffffff"/><rect x="8" y="10" width="2" height="1" fill="#ffffff"/><rect x="4" y="11" width="4" height="1" fill="#ffffff"/><rect x="4" y="1" width="4" height="1" fill="#696969"/><rect x="2" y="2" width="2" height="1" fill="#696969"/><rect x="8" y="2" width="2" height="1" fill="#696969"/><rect x="2" y="3" width="1" height="1" fill="#696969"/><rect x="1" y="4" width="1" height="4" fill="#696969"/><rect x="2" y="8" width="1" height="1" fill="#696969"/><rect x="9" y="3" width="1" height="1" fill="#e3e3e3"/><rect x="10" y="4" width="1" height="4" fill="#e3e3e3"/><rect x="9" y="8" width="1" height="1" fill="#e3e3e3"/><rect x="2" y="9" width="2" height="1" fill="#e3e3e3"/><rect x="8" y="9" width="2" height="1" fill="#e3e3e3"/><rect x="4" y="10" width="4" height="1" fill="#e3e3e3"/></svg><div class="u" style="left:240px;top:645px;">2 bits</div><div class="b" style="left:144px;top:670px;width:152px;height:43px;border:1px solid #fff;"></div><div class="b" style="left:143px;top:669px;width:152px;height:43px;border:1px solid #a0a0a0;"></div><div class="u" style="left:151px;top:665px;background:#f0f0f0;padding:0 1px 0 1px;height:11px"><u>H</u>ardware Flow Control</div><svg class="b" style="left:152px;top:679px" width="12" height="12" shape-rendering="crispEdges"><rect x="3" y="2" width="6" height="8" fill="#ffffff"/><rect x="2" y="3" width="8" height="6" fill="#ffffff"/><rect x="4" y="0" width="4" height="1" fill="#a0a0a0"/><rect x="2" y="1" width="2" height="1" fill="#a0a0a0"/><rect x="8" y="1" width="2" height="1" fill="#a0a0a0"/><rect x="1" y="2" width="1" height="2" fill="#a0a0a0"/><rect x="0" y="4" width="1" height="4" fill="#a0a0a0"/><rect x="1" y="8" width="1" height="2" fill="#a0a0a0"/><rect x="10" y="2" width="1" height="2" fill="#ffffff"/><rect x="11" y="4" width="1" height="4" fill="#ffffff"/><rect x="10" y="8" width="1" height="2" fill="#ffffff"/><rect x="2" y="10" width="2" height="1" fill="#ffffff"/><rect x="8" y="10" width="2" height="1" fill="#ffffff"/><rect x="4" y="11" width="4" height="1" fill="#ffffff"/><rect x="4" y="1" width="4" height="1" fill="#696969"/><rect x="2" y="2" width="2" height="1" fill="#696969"/><rect x="8" y="2" width="2" height="1" fill="#696969"/><rect x="2" y="3" width="1" height="1" fill="#696969"/><rect x="1" y="4" width="1" height="4" fill="#696969"/><rect x="2" y="8" width="1" height="1" fill="#696969"/><rect x="9" y="3" width="1" height="1" fill="#e3e3e3"/><rect x="10" y="4" width="1" height="4" fill="#e3e3e3"/><rect x="9" y="8" width="1" height="1" fill="#e3e3e3"/><rect x="2" y="9" width="2" height="1" fill="#e3e3e3"/><rect x="8" y="9" width="2" height="1" fill="#e3e3e3"/><rect x="4" y="10" width="4" height="1" fill="#e3e3e3"/><rect x="5" y="4" width="2" height="1" fill="#000"/><rect x="4" y="5" width="4" height="2" fill="#000"/><rect x="5" y="7" width="2" height="1" fill="#000"/></svg><div class="u" style="left:169px;top:679px;">None</div><svg class="b" style="left:223px;top:679px" width="12" height="12" shape-rendering="crispEdges"><rect x="3" y="2" width="6" height="8" fill="#ffffff"/><rect x="2" y="3" width="8" height="6" fill="#ffffff"/><rect x="4" y="0" width="4" height="1" fill="#a0a0a0"/><rect x="2" y="1" width="2" height="1" fill="#a0a0a0"/><rect x="8" y="1" width="2" height="1" fill="#a0a0a0"/><rect x="1" y="2" width="1" height="2" fill="#a0a0a0"/><rect x="0" y="4" width="1" height="4" fill="#a0a0a0"/><rect x="1" y="8" width="1" height="2" fill="#a0a0a0"/><rect x="10" y="2" width="1" height="2" fill="#ffffff"/><rect x="11" y="4" width="1" height="4" fill="#ffffff"/><rect x="10" y="8" width="1" height="2" fill="#ffffff"/><rect x="2" y="10" width="2" height="1" fill="#ffffff"/><rect x="8" y="10" width="2" height="1" fill="#ffffff"/><rect x="4" y="11" width="4" height="1" fill="#ffffff"/><rect x="4" y="1" width="4" height="1" fill="#696969"/><rect x="2" y="2" width="2" height="1" fill="#696969"/><rect x="8" y="2" width="2" height="1" fill="#696969"/><rect x="2" y="3" width="1" height="1" fill="#696969"/><rect x="1" y="4" width="1" height="4" fill="#696969"/><rect x="2" y="8" width="1" height="1" fill="#696969"/><rect x="9" y="3" width="1" height="1" fill="#e3e3e3"/><rect x="10" y="4" width="1" height="4" fill="#e3e3e3"/><rect x="9" y="8" width="1" height="1" fill="#e3e3e3"/><rect x="2" y="9" width="2" height="1" fill="#e3e3e3"/><rect x="8" y="9" width="2" height="1" fill="#e3e3e3"/><rect x="4" y="10" width="4" height="1" fill="#e3e3e3"/></svg><div class="u" style="left:240px;top:679px;">RTS/CTS</div><svg class="b" style="left:152px;top:694px" width="12" height="12" shape-rendering="crispEdges"><rect x="3" y="2" width="6" height="8" fill="#ffffff"/><rect x="2" y="3" width="8" height="6" fill="#ffffff"/><rect x="4" y="0" width="4" height="1" fill="#a0a0a0"/><rect x="2" y="1" width="2" height="1" fill="#a0a0a0"/><rect x="8" y="1" width="2" height="1" fill="#a0a0a0"/><rect x="1" y="2" width="1" height="2" fill="#a0a0a0"/><rect x="0" y="4" width="1" height="4" fill="#a0a0a0"/><rect x="1" y="8" width="1" height="2" fill="#a0a0a0"/><rect x="10" y="2" width="1" height="2" fill="#ffffff"/><rect x="11" y="4" width="1" height="4" fill="#ffffff"/><rect x="10" y="8" width="1" height="2" fill="#ffffff"/><rect x="2" y="10" width="2" height="1" fill="#ffffff"/><rect x="8" y="10" width="2" height="1" fill="#ffffff"/><rect x="4" y="11" width="4" height="1" fill="#ffffff"/><rect x="4" y="1" width="4" height="1" fill="#696969"/><rect x="2" y="2" width="2" height="1" fill="#696969"/><rect x="8" y="2" width="2" height="1" fill="#696969"/><rect x="2" y="3" width="1" height="1" fill="#696969"/><rect x="1" y="4" width="1" height="4" fill="#696969"/><rect x="2" y="8" width="1" height="1" fill="#696969"/><rect x="9" y="3" width="1" height="1" fill="#e3e3e3"/><rect x="10" y="4" width="1" height="4" fill="#e3e3e3"/><rect x="9" y="8" width="1" height="1" fill="#e3e3e3"/><rect x="2" y="9" width="2" height="1" fill="#e3e3e3"/><rect x="8" y="9" width="2" height="1" fill="#e3e3e3"/><rect x="4" y="10" width="4" height="1" fill="#e3e3e3"/></svg><div class="u" style="left:169px;top:694px;">DTR/DSR</div><svg class="b" style="left:223px;top:694px" width="12" height="12" shape-rendering="crispEdges"><rect x="3" y="2" width="6" height="8" fill="#ffffff"/><rect x="2" y="3" width="8" height="6" fill="#ffffff"/><rect x="4" y="0" width="4" height="1" fill="#a0a0a0"/><rect x="2" y="1" width="2" height="1" fill="#a0a0a0"/><rect x="8" y="1" width="2" height="1" fill="#a0a0a0"/><rect x="1" y="2" width="1" height="2" fill="#a0a0a0"/><rect x="0" y="4" width="1" height="4" fill="#a0a0a0"/><rect x="1" y="8" width="1" height="2" fill="#a0a0a0"/><rect x="10" y="2" width="1" height="2" fill="#ffffff"/><rect x="11" y="4" width="1" height="4" fill="#ffffff"/><rect x="10" y="8" width="1" height="2" fill="#ffffff"/><rect x="2" y="10" width="2" height="1" fill="#ffffff"/><rect x="8" y="10" width="2" height="1" fill="#ffffff"/><rect x="4" y="11" width="4" height="1" fill="#ffffff"/><rect x="4" y="1" width="4" height="1" fill="#696969"/><rect x="2" y="2" width="2" height="1" fill="#696969"/><rect x="8" y="2" width="2" height="1" fill="#696969"/><rect x="2" y="3" width="1" height="1" fill="#696969"/><rect x="1" y="4" width="1" height="4" fill="#696969"/><rect x="2" y="8" width="1" height="1" fill="#696969"/><rect x="9" y="3" width="1" height="1" fill="#e3e3e3"/><rect x="10" y="4" width="1" height="4" fill="#e3e3e3"/><rect x="9" y="8" width="1" height="1" fill="#e3e3e3"/><rect x="2" y="9" width="2" height="1" fill="#e3e3e3"/><rect x="8" y="9" width="2" height="1" fill="#e3e3e3"/><rect x="4" y="10" width="4" height="1" fill="#e3e3e3"/></svg><div class="u" style="left:240px;top:694px;">RS485-rts</div><div class="b" style="left:303px;top:627px;width:157px;height:54px;border:1px solid #fff;"></div><div class="b" style="left:302px;top:626px;width:157px;height:54px;border:1px solid #a0a0a0;"></div><div class="u" style="left:309px;top:622px;background:#f0f0f0;padding:0 1px 0 1px;height:11px">Software Flo<u>w</u> Control</div><div class="b" style="left:305px;top:636px;width:13px;height:13px;background:#fff;box-shadow: inset 1px 1px 0 #a0a0a0, inset -1px -1px 0 #fff, inset 2px 2px 0 #696969, inset -2px -2px 0 #e3e3e3;"></div><div class="u" style="left:324px;top:636px;">Receive</div><div class="u" style="left:370px;top:636px;">Xon Char:</div><div class="b" style="left:421px;top:632px;width:34px;height:21px;background:#fff;box-shadow: inset 1px 1px 0 #a0a0a0, inset -1px -1px 0 #fff, inset 2px 2px 0 #696969, inset -2px -2px 0 #e3e3e3;"></div><div class="u" style="left:424px;top:636px;">17</div><div class="b" style="left:305px;top:659px;width:13px;height:13px;background:#fff;box-shadow: inset 1px 1px 0 #a0a0a0, inset -1px -1px 0 #fff, inset 2px 2px 0 #696969, inset -2px -2px 0 #e3e3e3;"></div><div class="u" style="left:324px;top:659px;">Transmit</div><div class="u" style="left:370px;top:659px;">Xoff Char:</div><div class="b" style="left:421px;top:656px;width:34px;height:21px;background:#fff;box-shadow: inset 1px 1px 0 #a0a0a0, inset -1px -1px 0 #fff, inset 2px 2px 0 #696969, inset -2px -2px 0 #e3e3e3;"></div><div class="u" style="left:424px;top:659px;">19</div><div class="b" style="left:384px;top:690px;width:72px;height:36px;border:1px solid #fff;"></div><div class="b" style="left:383px;top:689px;width:72px;height:36px;border:1px solid #a0a0a0;"></div><div class="u" style="left:390px;top:685px;color:#8d8d8d;background:#f0f0f0;padding:0 1px 0 1px;height:11px">Winsock is:</div><svg class="b" style="left:392px;top:698px" width="12" height="12" shape-rendering="crispEdges"><rect x="3" y="2" width="6" height="8" fill="#ffffff"/><rect x="2" y="3" width="8" height="6" fill="#ffffff"/><rect x="4" y="0" width="4" height="1" fill="#a0a0a0"/><rect x="2" y="1" width="2" height="1" fill="#a0a0a0"/><rect x="8" y="1" width="2" height="1" fill="#a0a0a0"/><rect x="1" y="2" width="1" height="2" fill="#a0a0a0"/><rect x="0" y="4" width="1" height="4" fill="#a0a0a0"/><rect x="1" y="8" width="1" height="2" fill="#a0a0a0"/><rect x="10" y="2" width="1" height="2" fill="#ffffff"/><rect x="11" y="4" width="1" height="4" fill="#ffffff"/><rect x="10" y="8" width="1" height="2" fill="#ffffff"/><rect x="2" y="10" width="2" height="1" fill="#ffffff"/><rect x="8" y="10" width="2" height="1" fill="#ffffff"/><rect x="4" y="11" width="4" height="1" fill="#ffffff"/><rect x="4" y="1" width="4" height="1" fill="#696969"/><rect x="2" y="2" width="2" height="1" fill="#696969"/><rect x="8" y="2" width="2" height="1" fill="#696969"/><rect x="2" y="3" width="1" height="1" fill="#696969"/><rect x="1" y="4" width="1" height="4" fill="#696969"/><rect x="2" y="8" width="1" height="1" fill="#696969"/><rect x="9" y="3" width="1" height="1" fill="#e3e3e3"/><rect x="10" y="4" width="1" height="4" fill="#e3e3e3"/><rect x="9" y="8" width="1" height="1" fill="#e3e3e3"/><rect x="2" y="9" width="2" height="1" fill="#e3e3e3"/><rect x="8" y="9" width="2" height="1" fill="#e3e3e3"/><rect x="4" y="10" width="4" height="1" fill="#e3e3e3"/></svg><div class="u" style="left:409px;top:698px;color:#8d8d8d;">Raw</div><svg class="b" style="left:392px;top:710px" width="12" height="12" shape-rendering="crispEdges"><rect x="3" y="2" width="6" height="8" fill="#ffffff"/><rect x="2" y="3" width="8" height="6" fill="#ffffff"/><rect x="4" y="0" width="4" height="1" fill="#a0a0a0"/><rect x="2" y="1" width="2" height="1" fill="#a0a0a0"/><rect x="8" y="1" width="2" height="1" fill="#a0a0a0"/><rect x="1" y="2" width="1" height="2" fill="#a0a0a0"/><rect x="0" y="4" width="1" height="4" fill="#a0a0a0"/><rect x="1" y="8" width="1" height="2" fill="#a0a0a0"/><rect x="10" y="2" width="1" height="2" fill="#ffffff"/><rect x="11" y="4" width="1" height="4" fill="#ffffff"/><rect x="10" y="8" width="1" height="2" fill="#ffffff"/><rect x="2" y="10" width="2" height="1" fill="#ffffff"/><rect x="8" y="10" width="2" height="1" fill="#ffffff"/><rect x="4" y="11" width="4" height="1" fill="#ffffff"/><rect x="4" y="1" width="4" height="1" fill="#696969"/><rect x="2" y="2" width="2" height="1" fill="#696969"/><rect x="8" y="2" width="2" height="1" fill="#696969"/><rect x="2" y="3" width="1" height="1" fill="#696969"/><rect x="1" y="4" width="1" height="4" fill="#696969"/><rect x="2" y="8" width="1" height="1" fill="#696969"/><rect x="9" y="3" width="1" height="1" fill="#e3e3e3"/><rect x="10" y="4" width="1" height="4" fill="#e3e3e3"/><rect x="9" y="8" width="1" height="1" fill="#e3e3e3"/><rect x="2" y="9" width="2" height="1" fill="#e3e3e3"/><rect x="8" y="9" width="2" height="1" fill="#e3e3e3"/><rect x="4" y="10" width="4" height="1" fill="#e3e3e3"/><rect x="5" y="4" width="2" height="1" fill="#000"/><rect x="4" y="5" width="4" height="2" fill="#000"/><rect x="5" y="7" width="2" height="1" fill="#000"/></svg><div class="u" style="left:409px;top:710px;color:#8d8d8d;">Telnet</div><div class="b" style="left:822px;top:590px;width:79px;height:156px;border:1px solid #fff;"></div><div class="b" style="left:821px;top:589px;width:79px;height:156px;border:1px solid #a0a0a0;"></div><div class="u" style="left:828px;top:585px;background:#f0f0f0;padding:0 1px 0 1px;height:11px">Status</div><div class="b" style="left:829px;top:600px;width:13px;height:13px;border-top:1px solid #fff;border-left:1px solid #fff;border-right:1px solid #808080;border-bottom:1px solid #808080;"></div><div class="b" style="left:840px;top:600px;width:59px;height:14px;overflow:hidden"><div class="u" style="left:5px;top:1px">Disconnect</div></div><div class="b" style="left:829px;top:616px;width:13px;height:13px;border-top:1px solid #fff;border-left:1px solid #fff;border-right:1px solid #808080;border-bottom:1px solid #808080;"></div><div class="u" style="left:845px;top:617px;">RXD (2)</div><div class="b" style="left:829px;top:632px;width:13px;height:13px;border-top:1px solid #fff;border-left:1px solid #fff;border-right:1px solid #808080;border-bottom:1px solid #808080;"></div><div class="u" style="left:845px;top:633px;">TXD (3)</div><div class="b" style="left:829px;top:648px;width:13px;height:13px;border-top:1px solid #fff;border-left:1px solid #fff;border-right:1px solid #808080;border-bottom:1px solid #808080;"></div><div class="u" style="left:845px;top:649px;">CTS (8)</div><div class="b" style="left:829px;top:664px;width:13px;height:13px;border-top:1px solid #fff;border-left:1px solid #fff;border-right:1px solid #808080;border-bottom:1px solid #808080;"></div><div class="u" style="left:845px;top:665px;">DCD (1)</div><div class="b" style="left:829px;top:680px;width:13px;height:13px;border-top:1px solid #fff;border-left:1px solid #fff;border-right:1px solid #808080;border-bottom:1px solid #808080;"></div><div class="u" style="left:845px;top:681px;">DSR (6)</div><div class="b" style="left:829px;top:696px;width:13px;height:13px;border-top:1px solid #fff;border-left:1px solid #fff;border-right:1px solid #808080;border-bottom:1px solid #808080;"></div><div class="u" style="left:845px;top:697px;">Ring (9)</div><div class="b" style="left:829px;top:712px;width:13px;height:13px;border-top:1px solid #fff;border-left:1px solid #fff;border-right:1px solid #808080;border-bottom:1px solid #808080;"></div><div class="u" style="left:845px;top:713px;">BREAK</div><div class="b" style="left:829px;top:728px;width:13px;height:13px;border-top:1px solid #fff;border-left:1px solid #fff;border-right:1px solid #808080;border-bottom:1px solid #808080;"></div><div class="u" style="left:845px;top:729px;">Error</div><div class="b" style="left:1px;top:753px;width:910px;height:1px;background:#fff;"></div><div class="b" style="left:1px;top:755px;width:349px;height:22px;border-top:1px solid #a0a0a0;border-left:1px solid #a0a0a0;border-right:1px solid #fff;"></div><div class="b" style="left:353px;top:755px;width:117px;height:22px;border-top:1px solid #a0a0a0;border-left:1px solid #a0a0a0;border-right:1px solid #fff;"></div><div class="b" style="left:473px;top:755px;width:68px;height:22px;border-top:1px solid #a0a0a0;border-left:1px solid #a0a0a0;border-right:1px solid #fff;"></div><div class="b" style="left:543px;top:755px;width:367px;height:22px;border-top:1px solid #a0a0a0;border-left:1px solid #a0a0a0;border-right:1px solid #fff;"></div><div class="s" style="left:3px;top:760px;">You can use ActiveX automation to control me!</div><div class="s" style="left:355px;top:760px;letter-spacing:-0.15px;">Char Count:2389</div><div class="s" style="left:475px;top:760px;letter-spacing:-0.6px;">CPS:0</div><div class="s" style="left:545px;top:760px;letter-spacing:-0.22px;">Port: 3 115200 8N1 None</div><svg class="b" style="left:896px;top:762px" width="14" height="14" viewBox="0 0 14 14"><path d="M13 1 L1 13 M13 5 L5 13 M13 9 L9 13" stroke="#a0a0a0" stroke-width="1"/></svg><div class="b" style="left:0px;top:0px;width:912px;height:778px;border:1px solid #0f5070;border-top-color:#04365a;border-right-color:#063a60;"></div></body></html>
